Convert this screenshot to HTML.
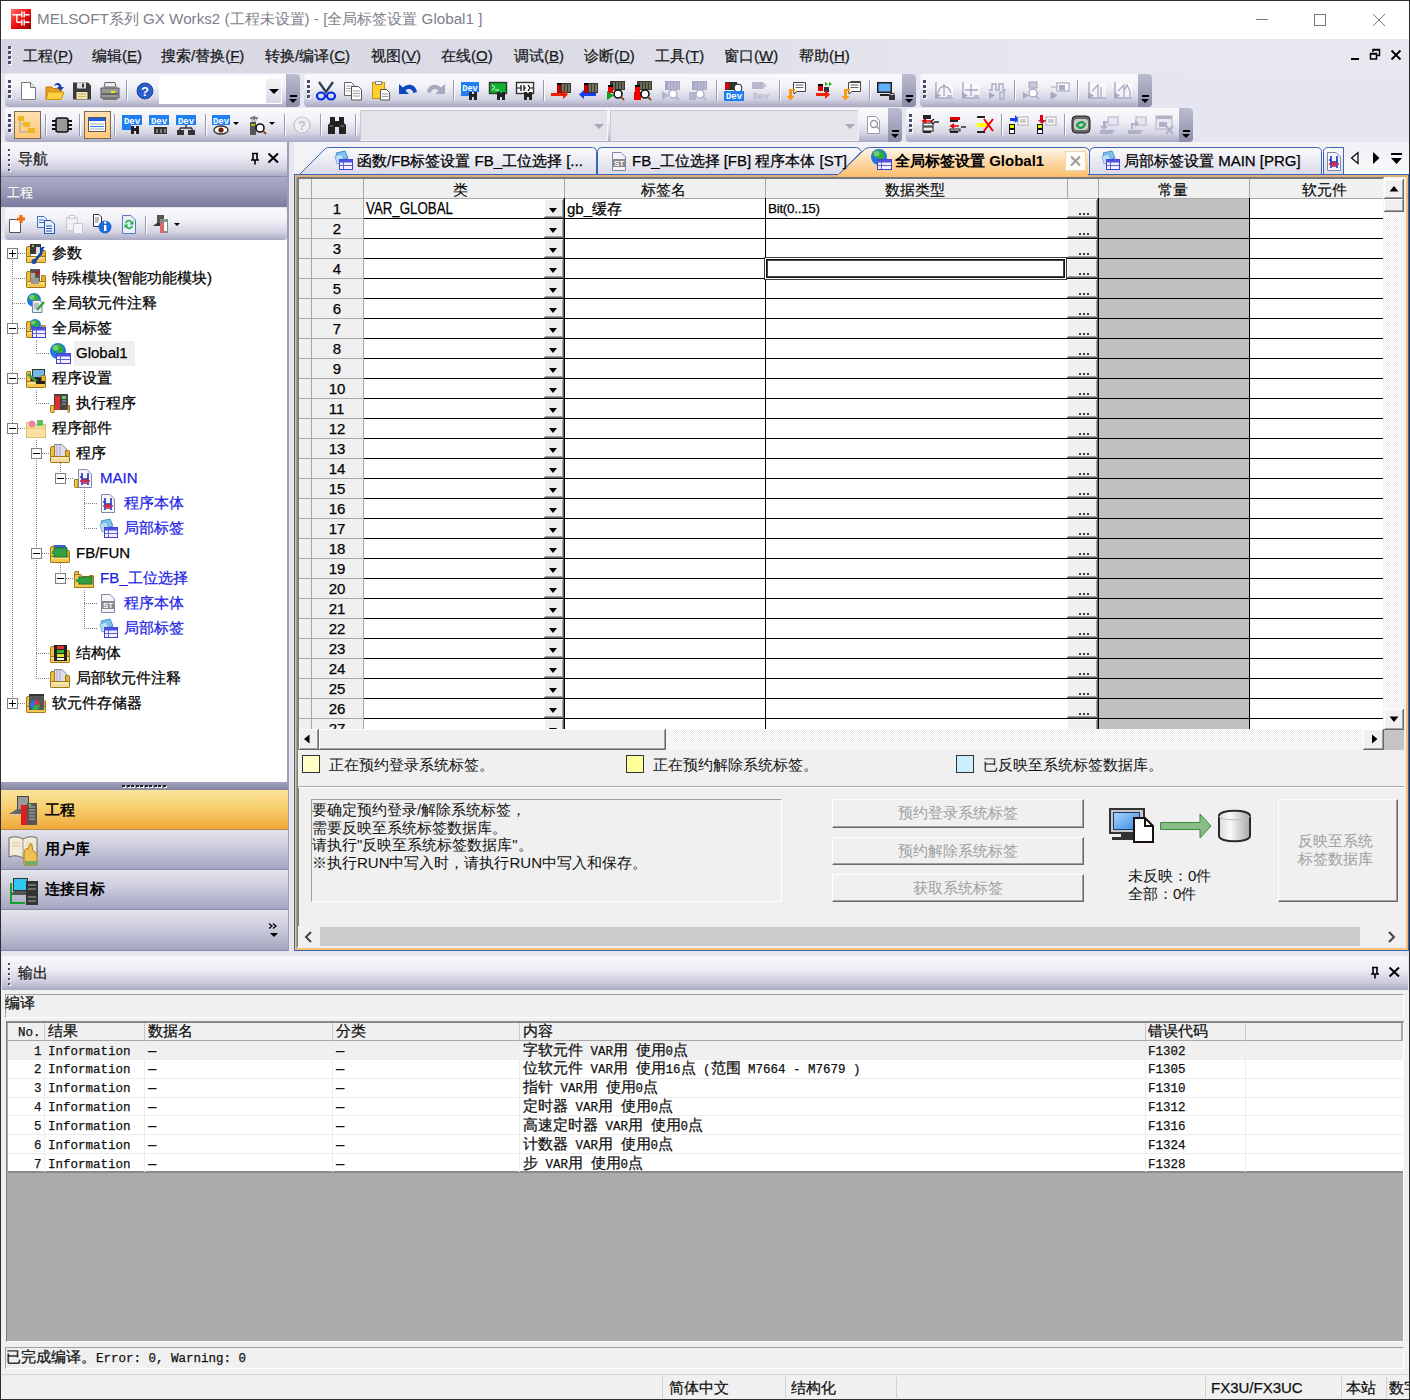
<!DOCTYPE html><html><head><meta charset="utf-8"><style>
*{margin:0;padding:0;box-sizing:border-box}
html,body{width:1410px;height:1400px;overflow:hidden}
body{position:relative;background:#2e2e2e;font-family:"Liberation Sans",sans-serif;font-size:15px;color:#000}
div{position:absolute}
.t{white-space:nowrap;line-height:20px;height:20px;-webkit-text-stroke:0.25px currentColor}
.tbar{border-radius:4px;background:linear-gradient(#fafafd 0%,#f0f0f6 40%,#d4d4e4 75%,#a8a8c2 100%)}
.ovf{border-radius:0 4px 4px 0;background:linear-gradient(#bcbcd0,#8c8caa)}
.sep{width:2px;background:linear-gradient(90deg,#9898b4 50%,#fff 50%)}
.u{text-decoration:underline;text-underline-offset:1px}
.gr{width:2px;height:2px;background:#4a4a70;box-shadow:1px 1px 0 #fff}
.tri{width:0;height:0;border-left:4px solid transparent;border-right:4px solid transparent;border-top:5px solid #000}
</style></head><body>
<div style="left:1px;top:1px;width:1408px;height:1398px;background:#e6e6f0"></div>
<div style="left:1409px;top:0px;width:1px;height:1400px;background:#3a5a8a"></div>
<div style="left:1px;top:1px;width:1408px;height:38px;background:#fff"></div>
<svg style="position:absolute;left:11px;top:9px;" width="20" height="20" viewBox="0 0 20 20"><defs><linearGradient id="rg" x1="0" y1="0" x2="1" y2="1"><stop offset="0" stop-color="#ff7070"/><stop offset=".5" stop-color="#f01010"/><stop offset="1" stop-color="#900000"/></linearGradient></defs><rect width="20" height="20" fill="url(#rg)"/><path d="M1.5 5.8H10M13 5.8H18.5M5.8 5.8V13.3M5.8 13.3H10M13 13.3H18.5M10.8 2.5V8.5M13.2 2.5V8.5M10.8 10.5V16.5M13.2 10.5V16.5" stroke="#fff" stroke-width="1.4" fill="none"/></svg>
<div class="t" style="left:37px;top:9px;color:#80808a;font-size:15.2px;-webkit-text-stroke:0">MELSOFT系列 GX Works2 (工程未设置) - [全局标签设置 Global1 ]</div>
<div style="left:1256px;top:19px;width:12px;height:1px;background:#777"></div>
<div style="left:1314px;top:14px;width:12px;height:12px;border:1px solid #777"></div>
<svg style="position:absolute;left:1372px;top:13px;" width="14" height="14" viewBox="0 0 14 14"><path d="M1 1L13 13M13 1L1 13" stroke="#777" stroke-width="1"/></svg>
<div style="left:1px;top:39px;width:1408px;height:34px;background:linear-gradient(90deg,#d6d6e4 0%,#dcdce8 40%,#e6e6ee 70%,#e8e8f0 100%)"></div>
<div class="gr" style="left:8px;top:46px;width:3px;height:3px;"></div>
<div class="gr" style="left:8px;top:51px;width:3px;height:3px;"></div>
<div class="gr" style="left:8px;top:56px;width:3px;height:3px;"></div>
<div class="gr" style="left:8px;top:61px;width:3px;height:3px;"></div>
<div class="t" style="left:23px;top:46px;color:#1a1a1a">工程(<span class="u">P</span>)</div>
<div class="t" style="left:92px;top:46px;color:#1a1a1a">编辑(<span class="u">E</span>)</div>
<div class="t" style="left:161px;top:46px;color:#1a1a1a">搜索/替换(<span class="u">F</span>)</div>
<div class="t" style="left:265px;top:46px;color:#1a1a1a">转换/编译(<span class="u">C</span>)</div>
<div class="t" style="left:371px;top:46px;color:#1a1a1a">视图(<span class="u">V</span>)</div>
<div class="t" style="left:441px;top:46px;color:#1a1a1a">在线(<span class="u">O</span>)</div>
<div class="t" style="left:514px;top:46px;color:#1a1a1a">调试(<span class="u">B</span>)</div>
<div class="t" style="left:584px;top:46px;color:#1a1a1a">诊断(<span class="u">D</span>)</div>
<div class="t" style="left:655px;top:46px;color:#1a1a1a">工具(<span class="u">T</span>)</div>
<div class="t" style="left:724px;top:46px;color:#1a1a1a">窗口(<span class="u">W</span>)</div>
<div class="t" style="left:799px;top:46px;color:#1a1a1a">帮助(<span class="u">H</span>)</div>
<div style="left:1351px;top:58px;width:8px;height:2px;background:#000"></div>
<svg style="position:absolute;left:1369px;top:48px;" width="12" height="13" viewBox="0 0 12 13"><path d="M4 4V1.5H10.5V7.5H8" stroke="#000" stroke-width="1.5" fill="none"/><path d="M4 2.2H10.5" stroke="#000" stroke-width="1"/><rect x="1.5" y="5.5" width="6" height="5.5" stroke="#000" stroke-width="1.5" fill="none"/><path d="M1.5 6.2H7.5" stroke="#000"/></svg>
<svg style="position:absolute;left:1390px;top:49px;" width="12" height="12" viewBox="0 0 12 12"><path d="M1.5 1.5L10.5 10.5M10.5 1.5L1.5 10.5" stroke="#000" stroke-width="1.8"/></svg>
<div class="tbar" style="left:5px;top:74px;width:295px;height:33px;"></div>
<div class="gr" style="left:8px;top:80px;width:3px;height:3px;"></div>
<div class="gr" style="left:8px;top:85px;width:3px;height:3px;"></div>
<div class="gr" style="left:8px;top:90px;width:3px;height:3px;"></div>
<div class="gr" style="left:8px;top:95px;width:3px;height:3px;"></div>
<div class="ovf" style="left:286px;top:74px;width:14px;height:33px;"></div>
<div style="left:290px;top:95px;width:7px;height:2px;background:#000"></div>
<div class="tri" style="left:289px;top:99px;border-left-width:4.5px;border-right-width:4.5px;border-top-width:4px"></div>
<div class="tbar" style="left:304px;top:74px;width:612px;height:33px;"></div>
<div class="gr" style="left:307px;top:80px;width:3px;height:3px;"></div>
<div class="gr" style="left:307px;top:85px;width:3px;height:3px;"></div>
<div class="gr" style="left:307px;top:90px;width:3px;height:3px;"></div>
<div class="gr" style="left:307px;top:95px;width:3px;height:3px;"></div>
<div class="ovf" style="left:902px;top:74px;width:14px;height:33px;"></div>
<div style="left:906px;top:95px;width:7px;height:2px;background:#000"></div>
<div class="tri" style="left:905px;top:99px;border-left-width:4.5px;border-right-width:4.5px;border-top-width:4px"></div>
<div class="tbar" style="left:920px;top:74px;width:232px;height:33px;"></div>
<div class="gr" style="left:923px;top:80px;width:3px;height:3px;"></div>
<div class="gr" style="left:923px;top:85px;width:3px;height:3px;"></div>
<div class="gr" style="left:923px;top:90px;width:3px;height:3px;"></div>
<div class="gr" style="left:923px;top:95px;width:3px;height:3px;"></div>
<div class="ovf" style="left:1138px;top:74px;width:14px;height:33px;"></div>
<div style="left:1142px;top:95px;width:7px;height:2px;background:#000"></div>
<div class="tri" style="left:1141px;top:99px;border-left-width:4.5px;border-right-width:4.5px;border-top-width:4px"></div>
<div class="tbar" style="left:5px;top:108px;width:897px;height:34px;"></div>
<div class="gr" style="left:8px;top:114px;width:3px;height:3px;"></div>
<div class="gr" style="left:8px;top:119px;width:3px;height:3px;"></div>
<div class="gr" style="left:8px;top:124px;width:3px;height:3px;"></div>
<div class="gr" style="left:8px;top:129px;width:3px;height:3px;"></div>
<div class="ovf" style="left:888px;top:108px;width:14px;height:34px;"></div>
<div style="left:892px;top:130px;width:7px;height:2px;background:#000"></div>
<div class="tri" style="left:891px;top:134px;border-left-width:4.5px;border-right-width:4.5px;border-top-width:4px"></div>
<div class="tbar" style="left:906px;top:108px;width:287px;height:34px;"></div>
<div class="gr" style="left:909px;top:114px;width:3px;height:3px;"></div>
<div class="gr" style="left:909px;top:119px;width:3px;height:3px;"></div>
<div class="gr" style="left:909px;top:124px;width:3px;height:3px;"></div>
<div class="gr" style="left:909px;top:129px;width:3px;height:3px;"></div>
<div class="ovf" style="left:1179px;top:108px;width:14px;height:34px;"></div>
<div style="left:1183px;top:130px;width:7px;height:2px;background:#000"></div>
<div class="tri" style="left:1182px;top:134px;border-left-width:4.5px;border-right-width:4.5px;border-top-width:4px"></div>
<svg style="position:absolute;left:19px;top:81px;overflow:visible" width="20" height="20" viewBox="0 0 20 20"><path d="M2.5 1.5H11.5L16.5 6.5V18.5H2.5Z" fill="#fff" stroke="#777" stroke-width="1"/><path d="M11.5 1.5V6.5H16.5" fill="#e8e8e8" stroke="#777"/></svg>
<svg style="position:absolute;left:45px;top:81px;overflow:visible" width="20" height="20" viewBox="0 0 20 20"><path d="M1 6H7L8.5 7.5H16V18H1Z" fill="#e8a020" stroke="#c07810"/><path d="M3 11H19L16 18.5H1Z" fill="#ffd040" stroke="#d09010"/><path d="M9 5C10 1 16 1 16.5 6L19 6L15.5 10L12 6L14 6C13.5 3.5 11 3.5 9 5Z" fill="#1040b0"/></svg>
<svg style="position:absolute;left:72px;top:81px;overflow:visible" width="20" height="20" viewBox="0 0 20 20"><path d="M1 1.5H16L19 4.5V18.5H1Z" fill="#3a3a3a"/><rect x="5" y="1.5" width="9" height="6" fill="#ddd"/><rect x="10" y="2.5" width="2" height="4" fill="#3a3a3a"/><rect x="4.5" y="11" width="11" height="7" fill="#f4e4a8"/><path d="M6 13H14M6 15.5H14" stroke="#c8b880"/></svg>
<svg style="position:absolute;left:100px;top:81px;overflow:visible" width="20" height="20" viewBox="0 0 20 20"><path d="M5 1.5H15L16 6H4Z" fill="#eee" stroke="#666"/><path d="M1 7H19V17H1Z" fill="#999" stroke="#555" rx="2"/><rect x="2" y="12" width="16" height="2" fill="#666"/><rect x="11" y="10" width="4" height="2" fill="#ee0"/><path d="M3 17H17V19H3Z" fill="#777"/></svg>
<div class="sep" style="left:126px;top:80px;width:2px;height:21px;"></div>
<svg style="position:absolute;left:135px;top:81px;overflow:visible" width="20" height="20" viewBox="0 0 20 20"><circle cx="10" cy="10" r="9" fill="#fff" opacity=".7"/><circle cx="10" cy="10" r="8" fill="#2a5ec8" stroke="#1a40a0"/><text x="10" y="15" font-size="13" text-anchor="middle" fill="#fff" font-family="Liberation Sans" font-weight="bold">?</text></svg>
<div style="left:159px;top:76px;width:123px;height:28px;background:#fff"></div>
<div style="left:266px;top:78px;width:15px;height:25px;background:linear-gradient(#f4f4f8,#d8d8e4)"></div>
<div class="tri" style="left:269px;top:89px;border-left-width:5px;border-right-width:5px;border-top-width:5px"></div>
<svg style="position:absolute;left:316px;top:81px;overflow:visible" width="20" height="20" viewBox="0 0 20 20"><path d="M3 1L10 11L17 1" stroke="#2a3e50" stroke-width="2.2" fill="none"/><ellipse cx="5" cy="15" rx="4" ry="3.5" fill="none" stroke="#0028f0" stroke-width="2.2"/><ellipse cx="15" cy="15" rx="4" ry="3.5" fill="none" stroke="#0028f0" stroke-width="2.2"/></svg>
<svg style="position:absolute;left:343px;top:81px;overflow:visible" width="20" height="20" viewBox="0 0 20 20"><path d="M1.5 1.5H8.5L11 4V14.5H1.5Z" fill="#fff" stroke="#666"/><path d="M3 5H9M3 7.5H9M3 10H9" stroke="#aaa"/><path d="M8.5 5.5H15.5L18.5 8.5V19H8.5Z" fill="#fff" stroke="#555"/><path d="M10 10H17M10 12.5H17M10 15H17" stroke="#999"/></svg>
<svg style="position:absolute;left:371px;top:81px;overflow:visible" width="20" height="20" viewBox="0 0 20 20"><rect x="1.5" y="1.5" width="12" height="16" fill="#ffd030" stroke="#c89010"/><rect x="4.5" y="0.5" width="6" height="3" fill="#fff" stroke="#888"/><path d="M9.5 8.5H15.5L18.5 11.5V19H9.5Z" fill="#fff" stroke="#555"/><path d="M11 13H17M11 15.5H17" stroke="#999"/></svg>
<svg style="position:absolute;left:398px;top:81px;overflow:visible" width="20" height="20" viewBox="0 0 20 20"><path d="M1 3V13H11L7.5 9.5C10 7 14 7.5 15.5 12L19 11C17.5 3 10 2 5 6.5Z" fill="#1048c0"/></svg>
<svg style="position:absolute;left:426px;top:81px;overflow:visible" width="20" height="20" viewBox="0 0 20 20"><path d="M19 3V13H9L12.5 9.5C10 7 6 7.5 4.5 12L1 11C2.5 3 10 2 15 6.5Z" fill="#a8a8c0"/></svg>
<div class="sep" style="left:453px;top:80px;width:2px;height:21px;"></div>
<svg style="position:absolute;left:461px;top:81px;overflow:visible" width="20" height="20" viewBox="0 0 20 20"><rect x="0" y="1" width="18" height="10" fill="#1e80f0"/><text x="9" y="9.5" font-size="8.5" text-anchor="middle" fill="#fff" font-family="Liberation Mono" font-weight="bold">Dev</text><rect x="0" y="11" width="9" height="4" fill="#1e80f0"/><path d="M8 11h3v2h2v-2h3v8h-3v-3h-2v3h-3Z" fill="#222"/></svg>
<svg style="position:absolute;left:489px;top:81px;overflow:visible" width="20" height="20" viewBox="0 0 20 20"><rect x="0.5" y="1.5" width="17" height="11" fill="#10b030" stroke="#333" stroke-width="1.4"/><path d="M3 4L6 6.5L3 9M6 9H10" stroke="#fff" stroke-width="1" fill="none"/><path d="M8 11h3v2h2v-2h3v8h-3v-3h-2v3h-3Z" fill="#222"/></svg>
<svg style="position:absolute;left:516px;top:81px;overflow:visible" width="20" height="20" viewBox="0 0 20 20"><rect x="0.5" y="1.5" width="17" height="11" fill="#fff" stroke="#333" stroke-width="1.4"/><path d="M1 7H5M5 4V10M8 4V10M8 7H10M12 4L14 7L12 10M15 7H17" stroke="#000" stroke-width="1.2" fill="none"/><path d="M8 11h3v2h2v-2h3v8h-3v-3h-2v3h-3Z" fill="#222"/></svg>
<div class="sep" style="left:543px;top:80px;width:2px;height:21px;"></div>
<svg style="position:absolute;left:551px;top:81px;overflow:visible" width="20" height="20" viewBox="0 0 20 20"><rect x="6" y="2" width="14" height="10" fill="#3a3a30"/><path d="M12 3V11M15 3V11M18 3V11" stroke="#9a9a80" stroke-width="1.2"/><rect x="6" y="4" width="4" height="8" fill="#c00000"/><rect x="6" y="2" width="4" height="2" fill="#000"/><path d="M0 12H12V9L17 13.5L12 18V15H0Z" fill="#f02000"/></svg>
<svg style="position:absolute;left:578px;top:81px;overflow:visible" width="20" height="20" viewBox="0 0 20 20"><rect x="6" y="2" width="14" height="10" fill="#3a3a30"/><path d="M12 3V11M15 3V11M18 3V11" stroke="#9a9a80" stroke-width="1.2"/><rect x="6" y="4" width="4" height="8" fill="#c00000"/><rect x="6" y="2" width="4" height="2" fill="#000"/><path d="M18 12H6V9L1 13.5L6 18V15H18Z" fill="#1040f0"/></svg>
<svg style="position:absolute;left:606px;top:81px;overflow:visible" width="20" height="20" viewBox="0 0 20 20"><rect x="4" y="0" width="15" height="9" fill="#3a3a30"/><path d="M8 1V8M11 1V8M14 1V8M17 1V8" stroke="#9a9a80"/><rect x="2" y="4" width="5" height="8" fill="#e00"/><rect x="2" y="4" width="5" height="2" fill="#000"/><path d="M1 10V19L8 14.5Z" fill="#10a020"/><circle cx="12" cy="13" r="4" fill="#fff" stroke="#111" stroke-width="1.6"/><path d="M15 16L18 19" stroke="#8a4a10" stroke-width="2"/></svg>
<svg style="position:absolute;left:633px;top:81px;overflow:visible" width="20" height="20" viewBox="0 0 20 20"><rect x="4" y="0" width="15" height="9" fill="#3a3a30"/><path d="M8 1V8M11 1V8M14 1V8M17 1V8" stroke="#9a9a80"/><rect x="2" y="4" width="5" height="8" fill="#e00"/><rect x="2" y="4" width="5" height="2" fill="#000"/><rect x="1" y="11" width="7" height="8" fill="#f00000"/><circle cx="12" cy="13" r="4" fill="#fff" stroke="#111" stroke-width="1.6"/><path d="M15 16L18 19" stroke="#8a4a10" stroke-width="2"/></svg>
<svg style="position:absolute;left:661px;top:81px;overflow:visible" width="20" height="20" viewBox="0 0 20 20"><rect x="4" y="0" width="15" height="9" fill="#a8a8c4"/><path d="M8 1V8M11 1V8M14 1V8M17 1V8" stroke="#c8c8dc"/><path d="M1 10V19L8 14.5Z" fill="#b4b4cc"/><circle cx="12" cy="13" r="4" fill="#fff" stroke="#b4b4cc" stroke-width="1.6"/><path d="M15 16L18 19" stroke="#b4b4cc" stroke-width="2"/></svg>
<svg style="position:absolute;left:688px;top:81px;overflow:visible" width="20" height="20" viewBox="0 0 20 20"><rect x="4" y="0" width="15" height="9" fill="#a8a8c4"/><path d="M8 1V8M11 1V8M14 1V8M17 1V8" stroke="#c8c8dc"/><rect x="1" y="11" width="7" height="8" fill="#b4b4cc"/><circle cx="12" cy="13" r="4" fill="#fff" stroke="#b4b4cc" stroke-width="1.6"/><path d="M15 16L18 19" stroke="#b4b4cc" stroke-width="2"/></svg>
<div class="sep" style="left:716px;top:80px;width:2px;height:21px;"></div>
<svg style="position:absolute;left:724px;top:81px;overflow:visible" width="20" height="20" viewBox="0 0 20 20"><rect x="1" y="1" width="12" height="8" fill="#333"/><rect x="1" y="2" width="4" height="6" fill="#e00"/><circle cx="14" cy="7" r="4" fill="#fff" stroke="#222"/><rect x="0" y="10" width="20" height="10" fill="#1e80f0"/><text x="10" y="18" font-size="9" text-anchor="middle" fill="#fff" font-family="Liberation Mono" font-weight="bold">Dev</text></svg>
<svg style="position:absolute;left:751px;top:81px;overflow:visible" width="20" height="20" viewBox="0 0 20 20"><rect x="1" y="1" width="11" height="7" fill="#b8b8cc"/><path d="M12 1L16 4.5L12 8" fill="#c8c8d8"/><text x="10" y="17.5" font-size="9" text-anchor="middle" fill="#b8b8cc" font-family="Liberation Mono" font-weight="bold">Dev</text></svg>
<div class="sep" style="left:779px;top:80px;width:2px;height:21px;"></div>
<svg style="position:absolute;left:787px;top:81px;overflow:visible" width="20" height="20" viewBox="0 0 20 20"><path d="M6.5 1.5H18.5V10.5H10L7 13V10.5H6.5Z" fill="#fff" stroke="#444"/><path d="M8.5 4H16.5M8.5 6.5H16.5" stroke="#666"/><path d="M3 8H8V10H5V15H7.5L3.5 19.5L-0.5 15H2V8Z" fill="#ff9a10"/></svg>
<svg style="position:absolute;left:815px;top:81px;overflow:visible" width="20" height="20" viewBox="0 0 20 20"><rect x="3" y="4" width="5" height="6" fill="#d00"/><rect x="3" y="3" width="5" height="2" fill="#000"/><path d="M9 6H14V11H9Z" fill="#333"/><path d="M10 1L13 3L10 5ZM14 1L17 3L14 5Z" fill="#10b010"/><path d="M1 12H10V9L15 13.5L10 18V15H1Z" fill="#f02000"/></svg>
<svg style="position:absolute;left:842px;top:81px;overflow:visible" width="20" height="20" viewBox="0 0 20 20"><path d="M8.5 0.5H18.5V7.5" fill="none" stroke="#444"/><path d="M6.5 1.5H18.5V10.5H10L7 13V10.5H6.5Z" fill="#fff" stroke="#444"/><path d="M8.5 4H16.5M8.5 6.5H16.5" stroke="#666"/><path d="M3 8H8V10H5V15H7.5L3.5 19.5L-0.5 15H2V8Z" fill="#ff9a10"/></svg>
<div class="sep" style="left:869px;top:80px;width:2px;height:21px;"></div>
<svg style="position:absolute;left:876px;top:81px;overflow:visible" width="20" height="20" viewBox="0 0 20 20"><rect x="1" y="1" width="15" height="11" fill="#222"/><rect x="2.5" y="2.5" width="12" height="8" fill="#60b0f8"/><rect x="4" y="13" width="9" height="2" fill="#222"/><rect x="13" y="14" width="6" height="5" fill="#333"/><path d="M14 14V12.5H18V14" stroke="#333" fill="none"/></svg>
<svg style="position:absolute;left:934px;top:81px;overflow:visible" width="20" height="20" viewBox="0 0 20 20"><rect x="2" y="2" width="17" height="15" fill="#fff" opacity=".6"/><path d="M2 1V18M2 17H19" stroke="#a8a8c4" stroke-width="1.4"/><path d="M1 11L7 14.5L1 18Z" fill="#a8a8c4"/><path d="M10 3V15M4 12C6 3 14 3 17 12M13 15H18" stroke="#a8a8c4" stroke-width="1.3" fill="none"/></svg>
<svg style="position:absolute;left:961px;top:81px;overflow:visible" width="20" height="20" viewBox="0 0 20 20"><rect x="2" y="2" width="17" height="15" fill="#fff" opacity=".6"/><path d="M2 1V18M2 17H19" stroke="#a8a8c4" stroke-width="1.4"/><path d="M1 11L7 14.5L1 18Z" fill="#a8a8c4"/><path d="M10 3V15M4 9H17M13 15H18" stroke="#a8a8c4" stroke-width="1.3" fill="none"/></svg>
<svg style="position:absolute;left:988px;top:81px;overflow:visible" width="20" height="20" viewBox="0 0 20 20"><path d="M1 9H4V3H8V9H11V3H15V9H18" stroke="#a8a8c4" stroke-width="1.4" fill="none"/><rect x="12" y="11" width="4" height="7" fill="none" stroke="#a8a8c4" stroke-width="1.3"/><path d="M1 11L7 14.5L1 18Z" fill="#a8a8c4"/></svg>
<svg style="position:absolute;left:1022px;top:81px;overflow:visible" width="20" height="20" viewBox="0 0 20 20"><rect x="7" y="1" width="8" height="6" fill="#c8c8d8" stroke="#a8a8c4"/><circle cx="11" cy="12" r="4" fill="#fff" stroke="#a8a8c4" stroke-width="1.4"/><path d="M14 15L17 18" stroke="#a8a8c4" stroke-width="1.4"/><path d="M1 11L7 14.5L1 18Z" fill="#a8a8c4"/></svg>
<svg style="position:absolute;left:1050px;top:81px;overflow:visible" width="20" height="20" viewBox="0 0 20 20"><rect x="7" y="2" width="12" height="8" fill="#fff" stroke="#a8a8c4" stroke-width="1.2"/><rect x="9" y="4" width="6" height="5" fill="#a8a8c4"/><path d="M1 6H7M1 11L7 14.5L1 18Z" fill="#a8a8c4" stroke="#a8a8c4"/></svg>
<svg style="position:absolute;left:1087px;top:81px;overflow:visible" width="20" height="20" viewBox="0 0 20 20"><rect x="2" y="2" width="17" height="15" fill="#fff" opacity=".6"/><path d="M2 1V18M2 17H19" stroke="#a8a8c4" stroke-width="1.4"/><path d="M1 11L7 14.5L1 18Z" fill="#a8a8c4"/><path d="M5 10L11 4V16M14 6V16" stroke="#a8a8c4" stroke-width="1.3" fill="none"/></svg>
<svg style="position:absolute;left:1113px;top:81px;overflow:visible" width="20" height="20" viewBox="0 0 20 20"><rect x="2" y="2" width="17" height="15" fill="#fff" opacity=".6"/><path d="M2 1V18M2 17H19" stroke="#a8a8c4" stroke-width="1.4"/><path d="M1 11L7 14.5L1 18Z" fill="#a8a8c4"/><path d="M5 10L11 4V16M11 10L14 4L17 10V16" stroke="#a8a8c4" stroke-width="1.3" fill="none"/></svg>
<div class="sep" style="left:1014px;top:80px;width:2px;height:21px;"></div>
<div class="sep" style="left:1077px;top:80px;width:2px;height:21px;"></div>
<div style="left:14px;top:111px;width:27px;height:28px;background:linear-gradient(#ffe0b0,#ffc878);border:1px solid #7a6a50"></div>
<svg style="position:absolute;left:17px;top:115px;overflow:visible" width="20" height="20" viewBox="0 0 20 20"><rect x="1" y="1" width="6" height="5" fill="#f0b820"/><rect x="6" y="7" width="7" height="5" fill="#f0b820"/><rect x="11" y="13" width="7" height="5" fill="#f0b820"/><path d="M3 6V17H11M3 9H6" stroke="#aaa" stroke-width="1.2" fill="none"/></svg>
<div class="sep" style="left:45px;top:114px;width:2px;height:22px;"></div>
<svg style="position:absolute;left:52px;top:115px;overflow:visible" width="20" height="20" viewBox="0 0 20 20"><rect x="4" y="3" width="12" height="14" rx="2" fill="#999" stroke="#111" stroke-width="1.6"/><path d="M0 6H4M0 10H4M0 14H4M16 6H20M16 10H20M16 14H20" stroke="#111" stroke-width="1.8"/></svg>
<div class="sep" style="left:79px;top:114px;width:2px;height:22px;"></div>
<div style="left:84px;top:111px;width:27px;height:28px;background:linear-gradient(#ffe0b0,#ffc878);border:1px solid #7a6a50"></div>
<svg style="position:absolute;left:87px;top:115px;overflow:visible" width="20" height="20" viewBox="0 0 20 20"><rect x="1.5" y="2.5" width="17" height="14" fill="#fff" stroke="#555"/><rect x="2" y="3" width="16" height="3" fill="#2060e0"/><path d="M3 9H17M3 11.5H17M3 14H17" stroke="#aaa"/><path d="M3 11.5H17" stroke="#3080f0"/></svg>
<div class="sep" style="left:114px;top:114px;width:2px;height:22px;"></div>
<svg style="position:absolute;left:122px;top:115px;overflow:visible" width="20" height="20" viewBox="0 0 20 20"><rect x="0" y="0" width="20" height="10" fill="#1e80f0"/><text x="10" y="8.5" font-size="9" text-anchor="middle" fill="#fff" font-family="Liberation Mono" font-weight="bold">Dev</text><rect x="0" y="10" width="9" height="5" fill="#1e80f0"/><path d="M9 11h3v2h2v-2h3v8h-3v-3h-2v3h-3Z" fill="#222"/></svg>
<svg style="position:absolute;left:149px;top:115px;overflow:visible" width="20" height="20" viewBox="0 0 20 20"><rect x="0" y="0" width="20" height="10" fill="#1e80f0"/><text x="10" y="8.5" font-size="9" text-anchor="middle" fill="#fff" font-family="Liberation Mono" font-weight="bold">Dev</text><rect x="5" y="12" width="13" height="7" fill="#333"/><path d="M7 15H9M11 15H13M15 15H17M7 17H9M11 17H13M15 17H17" stroke="#ccc"/></svg>
<svg style="position:absolute;left:176px;top:115px;overflow:visible" width="20" height="20" viewBox="0 0 20 20"><rect x="0" y="0" width="20" height="10" fill="#1e80f0"/><text x="10" y="8.5" font-size="9" text-anchor="middle" fill="#fff" font-family="Liberation Mono" font-weight="bold">Dev</text><path d="M10 10V13M4 13H16M4 13V15M16 13V15" stroke="#333" stroke-width="1.4"/><rect x="1" y="15" width="7" height="5" fill="#333"/><rect x="12" y="15" width="7" height="5" fill="#333"/></svg>
<div class="sep" style="left:205px;top:114px;width:2px;height:22px;"></div>
<svg style="position:absolute;left:212px;top:115px;overflow:visible" width="28" height="20" viewBox="0 0 28 20"><rect x="0" y="0" width="18" height="10" fill="#1e80f0"/><text x="9" y="8.5" font-size="9" text-anchor="middle" fill="#fff" font-family="Liberation Mono" font-weight="bold">Dev</text><ellipse cx="9" cy="15" rx="7" ry="4" fill="#fff" stroke="#333" stroke-width="1.4"/><circle cx="9" cy="15" r="2.6" fill="#6a2000"/><path d="M21 7H27L24 10Z" fill="#000"/></svg>
<svg style="position:absolute;left:247px;top:115px;overflow:visible" width="28" height="20" viewBox="0 0 28 20"><path d="M7 1V5M3 3H11" stroke="#666" stroke-width="1.4"/><circle cx="7" cy="4" r="2.5" fill="none" stroke="#888"/><rect x="3" y="7" width="6" height="13" fill="#555"/><rect x="4" y="9" width="4" height="2" fill="#9c0"/><circle cx="13" cy="13" r="4" fill="#fff" stroke="#111" stroke-width="1.6"/><path d="M16 16L19 19" stroke="#8a4a10" stroke-width="2"/><path d="M22 7H28L25 10Z" fill="#000"/></svg>
<div class="sep" style="left:284px;top:114px;width:2px;height:22px;"></div>
<svg style="position:absolute;left:292px;top:115px;overflow:visible" width="20" height="20" viewBox="0 0 20 20"><circle cx="10" cy="10" r="8" fill="#f0f0f4" stroke="#c0c0c8" stroke-width="1.2"/><text x="10" y="15" font-size="13" text-anchor="middle" fill="#c0c0c8" font-family="Liberation Sans" font-weight="bold">?</text></svg>
<div class="sep" style="left:320px;top:114px;width:2px;height:22px;"></div>
<svg style="position:absolute;left:327px;top:115px;overflow:visible" width="20" height="20" viewBox="0 0 20 20"><path d="M3 2H8V6H12V2H17V8L19 10V19H12V12H8V19H1V10L3 8Z" fill="#222"/><path d="M2.5 11H6.5M13.5 11H17.5" stroke="#888"/></svg>
<div class="sep" style="left:355px;top:114px;width:2px;height:22px;"></div>
<div style="left:360px;top:110px;width:248px;height:31px;background:#e4e4ea;border:1px solid #c8c8d4;border-right-color:#f4f4f8;border-bottom-color:#f4f4f8"></div>
<div style="left:610px;top:110px;width:249px;height:31px;background:#e4e4ea;border:1px solid #c8c8d4;border-right-color:#f4f4f8;border-bottom-color:#f4f4f8"></div>
<div class="tri" style="left:594px;top:124px;border-left-width:5px;border-right-width:5px;border-top-width:5px;border-top-color:#a8a8b8"></div>
<div class="tri" style="left:845px;top:124px;border-left-width:5px;border-right-width:5px;border-top-width:5px;border-top-color:#a8a8b8"></div>
<svg style="position:absolute;left:865px;top:115px;overflow:visible" width="20" height="20" viewBox="0 0 20 20"><path d="M2.5 1.5H10.5L14.5 5.5V18.5H2.5Z" fill="#fff" stroke="#9a9aa8"/><circle cx="9" cy="9" r="3.5" fill="none" stroke="#9a9aa8" stroke-width="1.4"/><path d="M11.5 11.5L14 14" stroke="#9a9aa8" stroke-width="1.4"/></svg>
<svg style="position:absolute;left:920px;top:115px;overflow:visible" width="20" height="20" viewBox="0 0 20 20"><path d="M3 1H11M3 17H11" stroke="#222" stroke-width="2"/><rect x="3" y="8" width="10" height="3" fill="#fff" stroke="#222"/><rect x="3" y="12" width="10" height="4" fill="#eee" stroke="#222"/><path d="M14 7H19M14 4L11 6.5L14 9" stroke="#222" stroke-width="1.4" fill="none"/><path d="M6 8L3 6L6 4M3 6H12" stroke="#e00" stroke-width="1.6" fill="none"/><path d="M3 3H11" stroke="#222" stroke-width="2"/></svg>
<svg style="position:absolute;left:947px;top:115px;overflow:visible" width="20" height="20" viewBox="0 0 20 20"><rect x="3" y="2" width="10" height="3" fill="#d00"/><path d="M3 6H11M3 17H11" stroke="#222" stroke-width="2"/><path d="M14 12H19" stroke="#222" stroke-width="1.4"/><path d="M7 13L4 11L7 9M4 11H12" stroke="#e00" stroke-width="1.6" fill="none"/><rect x="3" y="14" width="10" height="2" fill="#eee" stroke="#222"/></svg>
<svg style="position:absolute;left:974px;top:115px;overflow:visible" width="20" height="20" viewBox="0 0 20 20"><path d="M3 2H11M3 17H11" stroke="#222" stroke-width="2"/><rect x="3" y="8" width="12" height="4" fill="#ff0"/><path d="M10 4L19 16M19 4L10 16" stroke="#e00" stroke-width="2"/></svg>
<div class="sep" style="left:1001px;top:114px;width:2px;height:22px;"></div>
<svg style="position:absolute;left:1008px;top:115px;overflow:visible" width="20" height="20" viewBox="0 0 20 20"><path d="M2 3H7V0L11 4L7 8V6H2Z" fill="#1040f0" transform=""/><rect x="1" y="9" width="6" height="10" fill="#111"/><rect x="2" y="10" width="4" height="3" fill="#ee0"/><rect x="2" y="15" width="4" height="3" fill="#fff"/><rect x="10" y="2" width="10" height="8" fill="#fff" stroke="#aaa"/><path d="M10 6H4" stroke="#1040f0" stroke-dasharray="1 1"/><path d="M12 5H18M12 7H18" stroke="#999"/></svg>
<svg style="position:absolute;left:1036px;top:115px;overflow:visible" width="20" height="20" viewBox="0 0 20 20"><path d="M2 3H7V0L11 4L7 8V6H2Z" fill="#e00" transform="rotate(90 6 4)"/><rect x="1" y="9" width="6" height="10" fill="#111"/><rect x="2" y="10" width="4" height="3" fill="#ee0"/><rect x="2" y="15" width="4" height="3" fill="#fff"/><rect x="10" y="2" width="10" height="8" fill="#fff" stroke="#aaa"/><path d="M10 6H4" stroke="#1040f0" stroke-dasharray="1 1"/><path d="M12 5H18M12 7H18" stroke="#999"/></svg>
<div class="sep" style="left:1064px;top:114px;width:2px;height:22px;"></div>
<svg style="position:absolute;left:1071px;top:115px;overflow:visible" width="20" height="20" viewBox="0 0 20 20"><rect x="1" y="1" width="18" height="17" rx="4" fill="#666" stroke="#222"/><rect x="3" y="4" width="14" height="11" rx="3" fill="#ccc"/><path d="M6 12C6 8 10 6 13 8M14 8C14 12 10 14 7 12" stroke="#10a040" stroke-width="2.2" fill="none"/></svg>
<svg style="position:absolute;left:1099px;top:115px;overflow:visible" width="20" height="20" viewBox="0 0 20 20"><rect x="9" y="2" width="10" height="8" fill="#e8e8f0" stroke="#b0b0c8"/><path d="M8 6H4V11H1L5 15L9 11H7V8H9" fill="#b0b0c8"/><path d="M1 15H16L13 19H1Z" fill="#b0b0c8"/></svg>
<svg style="position:absolute;left:1127px;top:115px;overflow:visible" width="20" height="20" viewBox="0 0 20 20"><rect x="9" y="2" width="10" height="8" fill="#e8e8f0" stroke="#b0b0c8"/><path d="M4 14V8H8V5L12 8.5L8 12V10H6V14Z" fill="#b0b0c8"/><path d="M1 15H16L13 19H1Z" fill="#b0b0c8"/></svg>
<svg style="position:absolute;left:1155px;top:115px;overflow:visible" width="20" height="20" viewBox="0 0 20 20"><rect x="1" y="1" width="16" height="13" fill="#e8e8f0" stroke="#b0b0c8"/><rect x="1" y="1" width="16" height="3" fill="#b0b0c8"/><rect x="4" y="7" width="8" height="5" fill="#b0b0c8"/><path d="M11 11L18 19M18 11L11 19" stroke="#b0b0c8" stroke-width="2"/></svg>
<div style="left:1px;top:142px;width:287px;height:34px;background:linear-gradient(#f6f6fa 0%,#eeeef6 40%,#cfcfe0 80%,#a9a9c3 100%);border-radius:3px 3px 0 0"></div>
<div class="gr" style="left:8px;top:149px;width:2px;height:2px;"></div>
<div class="gr" style="left:8px;top:154px;width:2px;height:2px;"></div>
<div class="gr" style="left:8px;top:159px;width:2px;height:2px;"></div>
<div class="gr" style="left:8px;top:164px;width:2px;height:2px;"></div>
<div class="gr" style="left:8px;top:169px;width:2px;height:2px;"></div>
<div class="t" style="left:18px;top:149px;color:#1a1a1a">导航</div>
<svg style="position:absolute;left:250px;top:152px;" width="10" height="13" viewBox="0 0 10 13"><path d="M2 1.5H8M3 1.5V8M7 1.5V8M1 8H9M5 8V12.5" stroke="#000" stroke-width="1.6" fill="none"/></svg>
<svg style="position:absolute;left:267px;top:152px;" width="13" height="12" viewBox="0 0 13 12"><path d="M1.5 1.5L11 10.5M11 1.5L1.5 10.5" stroke="#000" stroke-width="2"/></svg>
<div style="left:1px;top:176px;width:286px;height:1px;background:#8a8aa4"></div>
<div style="left:1px;top:177px;width:286px;height:30px;background:linear-gradient(#acacc8 0%,#9898b6 50%,#7a7a9e 100%)"></div>
<div class="t" style="left:7px;top:183px;color:#fff;font-size:12.5px;text-shadow:0 0 1px #666;-webkit-text-stroke:0.2px #fff">工程</div>
<div style="left:1px;top:207px;width:287px;height:33px;background:#e6e6f0"></div>
<div class="tbar" style="left:5px;top:208px;width:282px;height:32px;"></div>
<div class="sep" style="left:145px;top:216px;width:2px;height:18px;"></div>
<div style="left:1px;top:240px;width:287px;height:542px;background:#fff"></div>
<div style="left:287px;top:142px;width:2px;height:809px;background:#9c9cb4"></div>
<div style="left:1px;top:782px;width:287px;height:8px;background:linear-gradient(#a0a0bc,#8686a4)"></div>
<div style="left:122.0px;top:785px;width:3px;height:2px;background:#222;box-shadow:1px 1px 0 #fff"></div>
<div style="left:126.5px;top:785px;width:3px;height:2px;background:#222;box-shadow:1px 1px 0 #fff"></div>
<div style="left:131.0px;top:785px;width:3px;height:2px;background:#222;box-shadow:1px 1px 0 #fff"></div>
<div style="left:135.5px;top:785px;width:3px;height:2px;background:#222;box-shadow:1px 1px 0 #fff"></div>
<div style="left:140.0px;top:785px;width:3px;height:2px;background:#222;box-shadow:1px 1px 0 #fff"></div>
<div style="left:144.5px;top:785px;width:3px;height:2px;background:#222;box-shadow:1px 1px 0 #fff"></div>
<div style="left:149.0px;top:785px;width:3px;height:2px;background:#222;box-shadow:1px 1px 0 #fff"></div>
<div style="left:153.5px;top:785px;width:3px;height:2px;background:#222;box-shadow:1px 1px 0 #fff"></div>
<div style="left:158.0px;top:785px;width:3px;height:2px;background:#222;box-shadow:1px 1px 0 #fff"></div>
<div style="left:162.5px;top:785px;width:3px;height:2px;background:#222;box-shadow:1px 1px 0 #fff"></div>
<div style="left:1px;top:790px;width:287px;height:40px;background:linear-gradient(#fbe39a 0%,#f7cf70 45%,#f0a83a 100%);border-bottom:1px solid #b88a50"></div>
<div style="left:1px;top:830px;width:287px;height:40px;background:linear-gradient(#e4e4ee 0%,#c8c8da 50%,#a4a4c0 100%);border-bottom:1px solid #8a8aa8"></div>
<div style="left:1px;top:870px;width:287px;height:40px;background:linear-gradient(#e4e4ee 0%,#c8c8da 50%,#a4a4c0 100%);border-bottom:1px solid #8a8aa8"></div>
<div style="left:1px;top:910px;width:287px;height:41px;background:linear-gradient(#e4e4ee 0%,#c8c8da 50%,#a4a4c0 100%);border-bottom:1px solid #8a8aa8"></div>
<div class="t" style="left:45px;top:800px;font-weight:bold;color:#000;-webkit-text-stroke:0">工程</div>
<div class="t" style="left:45px;top:839px;font-weight:bold;color:#000;-webkit-text-stroke:0">用户库</div>
<div class="t" style="left:45px;top:879px;font-weight:bold;color:#000;-webkit-text-stroke:0">连接目标</div>
<svg style="position:absolute;left:268px;top:922px;" width="12" height="18" viewBox="0 0 12 18"><path d="M1 1.5L4 4L1 6.5M5 1.5L8 4L5 6.5" stroke="#000" stroke-width="1.3" fill="none"/><path d="M2 11H10L6 15Z" fill="#000"/></svg>
<div style="left:289px;top:142px;width:5px;height:809px;background:#e6e6f0"></div>
<div style="left:12px;top:258px;width:1px;height:444px;background:repeating-linear-gradient(#808080 0 1px,transparent 1px 2px)"></div>
<div style="left:36px;top:340px;width:1px;height:12px;background:repeating-linear-gradient(#808080 0 1px,transparent 1px 2px)"></div>
<div style="left:36px;top:390px;width:1px;height:12px;background:repeating-linear-gradient(#808080 0 1px,transparent 1px 2px)"></div>
<div style="left:36px;top:440px;width:1px;height:237px;background:repeating-linear-gradient(#808080 0 1px,transparent 1px 2px)"></div>
<div style="left:60px;top:463px;width:1px;height:9px;background:repeating-linear-gradient(#808080 0 1px,transparent 1px 2px)"></div>
<div style="left:84px;top:490px;width:1px;height:37px;background:repeating-linear-gradient(#808080 0 1px,transparent 1px 2px)"></div>
<div style="left:84px;top:590px;width:1px;height:37px;background:repeating-linear-gradient(#808080 0 1px,transparent 1px 2px)"></div>
<div style="left:60px;top:563px;width:1px;height:9px;background:repeating-linear-gradient(#808080 0 1px,transparent 1px 2px)"></div>
<div style="left:18px;top:253px;width:8px;height:1px;background:repeating-linear-gradient(90deg,#808080 0 1px,transparent 1px 2px)"></div>
<div style="left:7px;top:248px;width:11px;height:11px;background:#fff;border:1px solid #7f7f7f"></div>
<div style="left:9px;top:253px;width:7px;height:1px;background:#000"></div>
<div style="left:12px;top:250px;width:1px;height:7px;background:#000"></div>
<div class="t" style="left:52px;top:243px;color:#000">参数</div>
<div style="left:12px;top:278px;width:14px;height:1px;background:repeating-linear-gradient(90deg,#808080 0 1px,transparent 1px 2px)"></div>
<div class="t" style="left:52px;top:268px;color:#000">特殊模块(智能功能模块)</div>
<div style="left:12px;top:303px;width:14px;height:1px;background:repeating-linear-gradient(90deg,#808080 0 1px,transparent 1px 2px)"></div>
<div class="t" style="left:52px;top:293px;color:#000">全局软元件注释</div>
<div style="left:18px;top:328px;width:8px;height:1px;background:repeating-linear-gradient(90deg,#808080 0 1px,transparent 1px 2px)"></div>
<div style="left:7px;top:323px;width:11px;height:11px;background:#fff;border:1px solid #7f7f7f"></div>
<div style="left:9px;top:328px;width:7px;height:1px;background:#000"></div>
<div class="t" style="left:52px;top:318px;color:#000">全局标签</div>
<div style="left:36px;top:353px;width:14px;height:1px;background:repeating-linear-gradient(90deg,#808080 0 1px,transparent 1px 2px)"></div>
<div style="left:74px;top:341px;width:61px;height:25px;background:#efefef"></div>
<div class="t" style="left:76px;top:343px;color:#000">Global1</div>
<div style="left:18px;top:378px;width:8px;height:1px;background:repeating-linear-gradient(90deg,#808080 0 1px,transparent 1px 2px)"></div>
<div style="left:7px;top:373px;width:11px;height:11px;background:#fff;border:1px solid #7f7f7f"></div>
<div style="left:9px;top:378px;width:7px;height:1px;background:#000"></div>
<div class="t" style="left:52px;top:368px;color:#000">程序设置</div>
<div style="left:36px;top:403px;width:14px;height:1px;background:repeating-linear-gradient(90deg,#808080 0 1px,transparent 1px 2px)"></div>
<div class="t" style="left:76px;top:393px;color:#000">执行程序</div>
<div style="left:18px;top:428px;width:8px;height:1px;background:repeating-linear-gradient(90deg,#808080 0 1px,transparent 1px 2px)"></div>
<div style="left:7px;top:423px;width:11px;height:11px;background:#fff;border:1px solid #7f7f7f"></div>
<div style="left:9px;top:428px;width:7px;height:1px;background:#000"></div>
<div class="t" style="left:52px;top:418px;color:#000">程序部件</div>
<div style="left:42px;top:453px;width:8px;height:1px;background:repeating-linear-gradient(90deg,#808080 0 1px,transparent 1px 2px)"></div>
<div style="left:31px;top:448px;width:11px;height:11px;background:#fff;border:1px solid #7f7f7f"></div>
<div style="left:33px;top:453px;width:7px;height:1px;background:#000"></div>
<div class="t" style="left:76px;top:443px;color:#000">程序</div>
<div style="left:66px;top:478px;width:8px;height:1px;background:repeating-linear-gradient(90deg,#808080 0 1px,transparent 1px 2px)"></div>
<div style="left:55px;top:473px;width:11px;height:11px;background:#fff;border:1px solid #7f7f7f"></div>
<div style="left:57px;top:478px;width:7px;height:1px;background:#000"></div>
<div class="t" style="left:100px;top:468px;color:#1f1fe6">MAIN</div>
<div style="left:84px;top:503px;width:14px;height:1px;background:repeating-linear-gradient(90deg,#808080 0 1px,transparent 1px 2px)"></div>
<div class="t" style="left:124px;top:493px;color:#1f1fe6">程序本体</div>
<div style="left:84px;top:528px;width:14px;height:1px;background:repeating-linear-gradient(90deg,#808080 0 1px,transparent 1px 2px)"></div>
<div class="t" style="left:124px;top:518px;color:#1f1fe6">局部标签</div>
<div style="left:42px;top:553px;width:8px;height:1px;background:repeating-linear-gradient(90deg,#808080 0 1px,transparent 1px 2px)"></div>
<div style="left:31px;top:548px;width:11px;height:11px;background:#fff;border:1px solid #7f7f7f"></div>
<div style="left:33px;top:553px;width:7px;height:1px;background:#000"></div>
<div class="t" style="left:76px;top:543px;color:#000">FB/FUN</div>
<div style="left:66px;top:578px;width:8px;height:1px;background:repeating-linear-gradient(90deg,#808080 0 1px,transparent 1px 2px)"></div>
<div style="left:55px;top:573px;width:11px;height:11px;background:#fff;border:1px solid #7f7f7f"></div>
<div style="left:57px;top:578px;width:7px;height:1px;background:#000"></div>
<div class="t" style="left:100px;top:568px;color:#1f1fe6">FB_工位选择</div>
<div style="left:84px;top:603px;width:14px;height:1px;background:repeating-linear-gradient(90deg,#808080 0 1px,transparent 1px 2px)"></div>
<div class="t" style="left:124px;top:593px;color:#1f1fe6">程序本体</div>
<div style="left:84px;top:628px;width:14px;height:1px;background:repeating-linear-gradient(90deg,#808080 0 1px,transparent 1px 2px)"></div>
<div class="t" style="left:124px;top:618px;color:#1f1fe6">局部标签</div>
<div style="left:36px;top:653px;width:14px;height:1px;background:repeating-linear-gradient(90deg,#808080 0 1px,transparent 1px 2px)"></div>
<div class="t" style="left:76px;top:643px;color:#000">结构体</div>
<div style="left:36px;top:678px;width:14px;height:1px;background:repeating-linear-gradient(90deg,#808080 0 1px,transparent 1px 2px)"></div>
<div class="t" style="left:76px;top:668px;color:#000">局部软元件注释</div>
<div style="left:18px;top:703px;width:8px;height:1px;background:repeating-linear-gradient(90deg,#808080 0 1px,transparent 1px 2px)"></div>
<div style="left:7px;top:698px;width:11px;height:11px;background:#fff;border:1px solid #7f7f7f"></div>
<div style="left:9px;top:703px;width:7px;height:1px;background:#000"></div>
<div style="left:12px;top:700px;width:1px;height:7px;background:#000"></div>
<div class="t" style="left:52px;top:693px;color:#000">软元件存储器</div>
<div style="left:294px;top:142px;width:1115px;height:32px;background:#f2f2f7"></div>
<svg style="position:absolute;left:294px;top:142px;" width="1115" height="36" viewBox="0 0 1115 36"><defs><linearGradient id="tgi" x1="0" y1="0" x2="0" y2="1"><stop offset="0" stop-color="#fbfbfd"/><stop offset="1" stop-color="#dadae8"/></linearGradient><linearGradient id="tga" x1="0" y1="0" x2="0" y2="1"><stop offset="0" stop-color="#fff6ea"/><stop offset=".5" stop-color="#fdd8a8"/><stop offset="1" stop-color="#fcc070"/></linearGradient></defs><path d="M5.5,32.5 L31.5,6.5 Q32.5,5.5 36.5,5.5 L298.5,5.5 Q302.5,5.5 302.5,9.5 L302.5,32.5 Z" fill="url(#tgi)" stroke="#3a64b4" stroke-width="1"/><path d="M303.5,32.5 L303.5,9.5 Q303.5,5.5 307.5,5.5 L562.5,5.5 Q565.5,5.5 567.5,9.5 L544.5,32.5 Z" fill="url(#tgi)" stroke="#3a64b4" stroke-width="1"/><path d="M795.5,32.5 L795.5,10.5 Q795.5,5.5 801.5,5.5 L1022.5,5.5 Q1027.5,5.5 1027.5,9.5 L1027.5,32.5 Z" fill="url(#tgi)" stroke="#3a64b4" stroke-width="1"/><path d="M1029.5,32.5 L1029.5,9.5 Q1029.5,5.5 1034.5,5.5 L1049.5,5.5 L1049.5,32.5 Z" fill="url(#tgi)" stroke="#3a64b4" stroke-width="1"/><path d="M542.5,34.5 L570.5,7.5 Q572.5,5.5 576.5,5.5 L790.5,5.5 Q794.5,5.5 794.5,9.5 L794.5,34.5 Z" fill="url(#tga)"/><path d="M542.5,34.5 L570.5,7.5 Q572.5,5.5 576.5,5.5 L790.5,5.5 Q794.5,5.5 795.5,9.5" fill="none" stroke="#3a64b4" stroke-width="1"/></svg>
<div style="left:1344px;top:142px;width:64px;height:32px;background:linear-gradient(#f0f0f6,#fafafc)"></div>
<div class="t" style="left:357px;top:151px;color:#000">函数/FB标签设置 FB_工位选择 [...</div>
<div class="t" style="left:632px;top:151px;color:#000">FB_工位选择 [FB] 程序本体 [ST]</div>
<div class="t" style="left:895px;top:151px;color:#000;font-weight:bold;-webkit-text-stroke:0">全局标签设置 Global1</div>
<div style="left:1065px;top:151px;width:21px;height:20px;background:#fffdf4;border:1px solid #e8d8b8"></div>
<svg style="position:absolute;left:1069px;top:155px;" width="13" height="12" viewBox="0 0 13 12"><path d="M2 1.5L11 10.5M11 1.5L2 10.5" stroke="#9a9a9a" stroke-width="2"/></svg>
<div class="t" style="left:1124px;top:151px;color:#000">局部标签设置 MAIN [PRG]</div>
<svg style="position:absolute;left:1350px;top:151px;" width="10" height="14" viewBox="0 0 10 14"><path d="M8 1.5V12.5L1.5 7Z" fill="none" stroke="#000" stroke-width="1.2"/></svg>
<svg style="position:absolute;left:1371px;top:151px;" width="10" height="14" viewBox="0 0 10 14"><path d="M2 1V13L8.5 7Z" fill="#000"/></svg>
<svg style="position:absolute;left:1390px;top:152px;" width="13" height="13" viewBox="0 0 13 13"><rect x="1" y="1" width="11" height="2" fill="#000"/><path d="M1 6H12L6.5 12Z" fill="#000"/></svg>
<div style="left:294px;top:174px;width:1115px;height:777px;border:1px solid #3a64b4;background:#f0f0f0"></div>
<div style="left:295px;top:175px;width:1113px;height:775px;border:2px solid #f8c070;border-top-color:#dcb080;border-left-width:1px"></div>
<div style="left:296px;top:177px;width:1px;height:772px;background:#b0a080"></div>
<div style="left:838px;top:174px;width:250px;height:2px;background:#fcc070"></div>
<div style="left:837px;top:176px;width:252px;height:1px;background:#f4bc78"></div>
<div style="left:297px;top:178px;width:1087px;height:551px;background:#fff;overflow:hidden"></div>
<div style="left:298px;top:179px;width:1085px;height:19px;background:#f0f0f0"></div>
<div style="left:298px;top:198px;width:65px;height:531px;background:#f0f0f0"></div>
<div style="left:1098px;top:198px;width:151px;height:531px;background:#c0c0c0"></div>
<div style="left:297px;top:177px;width:1087px;height:2px;background:#787878"></div>
<div style="left:297px;top:177px;width:2px;height:552px;background:#787878"></div>
<div style="left:311px;top:179px;width:1px;height:19px;background:#a8a8a8"></div>
<div style="left:363px;top:179px;width:1px;height:19px;background:#a8a8a8"></div>
<div style="left:564px;top:179px;width:1px;height:19px;background:#a8a8a8"></div>
<div style="left:765px;top:179px;width:1px;height:19px;background:#a8a8a8"></div>
<div style="left:1067px;top:179px;width:1px;height:19px;background:#a8a8a8"></div>
<div style="left:1098px;top:179px;width:1px;height:19px;background:#a8a8a8"></div>
<div style="left:1249px;top:179px;width:1px;height:19px;background:#a8a8a8"></div>
<div style="left:298px;top:198px;width:1085px;height:1px;background:#a8a8a8"></div>
<div style="left:298px;top:218px;width:65px;height:1px;background:#a8a8a8"></div>
<div style="left:363px;top:218px;width:1020px;height:1px;background:#000"></div>
<div style="left:298px;top:238px;width:65px;height:1px;background:#a8a8a8"></div>
<div style="left:363px;top:238px;width:1020px;height:1px;background:#000"></div>
<div style="left:298px;top:258px;width:65px;height:1px;background:#a8a8a8"></div>
<div style="left:363px;top:258px;width:1020px;height:1px;background:#000"></div>
<div style="left:298px;top:278px;width:65px;height:1px;background:#a8a8a8"></div>
<div style="left:363px;top:278px;width:1020px;height:1px;background:#000"></div>
<div style="left:298px;top:298px;width:65px;height:1px;background:#a8a8a8"></div>
<div style="left:363px;top:298px;width:1020px;height:1px;background:#000"></div>
<div style="left:298px;top:318px;width:65px;height:1px;background:#a8a8a8"></div>
<div style="left:363px;top:318px;width:1020px;height:1px;background:#000"></div>
<div style="left:298px;top:338px;width:65px;height:1px;background:#a8a8a8"></div>
<div style="left:363px;top:338px;width:1020px;height:1px;background:#000"></div>
<div style="left:298px;top:358px;width:65px;height:1px;background:#a8a8a8"></div>
<div style="left:363px;top:358px;width:1020px;height:1px;background:#000"></div>
<div style="left:298px;top:378px;width:65px;height:1px;background:#a8a8a8"></div>
<div style="left:363px;top:378px;width:1020px;height:1px;background:#000"></div>
<div style="left:298px;top:398px;width:65px;height:1px;background:#a8a8a8"></div>
<div style="left:363px;top:398px;width:1020px;height:1px;background:#000"></div>
<div style="left:298px;top:418px;width:65px;height:1px;background:#a8a8a8"></div>
<div style="left:363px;top:418px;width:1020px;height:1px;background:#000"></div>
<div style="left:298px;top:438px;width:65px;height:1px;background:#a8a8a8"></div>
<div style="left:363px;top:438px;width:1020px;height:1px;background:#000"></div>
<div style="left:298px;top:458px;width:65px;height:1px;background:#a8a8a8"></div>
<div style="left:363px;top:458px;width:1020px;height:1px;background:#000"></div>
<div style="left:298px;top:478px;width:65px;height:1px;background:#a8a8a8"></div>
<div style="left:363px;top:478px;width:1020px;height:1px;background:#000"></div>
<div style="left:298px;top:498px;width:65px;height:1px;background:#a8a8a8"></div>
<div style="left:363px;top:498px;width:1020px;height:1px;background:#000"></div>
<div style="left:298px;top:518px;width:65px;height:1px;background:#a8a8a8"></div>
<div style="left:363px;top:518px;width:1020px;height:1px;background:#000"></div>
<div style="left:298px;top:538px;width:65px;height:1px;background:#a8a8a8"></div>
<div style="left:363px;top:538px;width:1020px;height:1px;background:#000"></div>
<div style="left:298px;top:558px;width:65px;height:1px;background:#a8a8a8"></div>
<div style="left:363px;top:558px;width:1020px;height:1px;background:#000"></div>
<div style="left:298px;top:578px;width:65px;height:1px;background:#a8a8a8"></div>
<div style="left:363px;top:578px;width:1020px;height:1px;background:#000"></div>
<div style="left:298px;top:598px;width:65px;height:1px;background:#a8a8a8"></div>
<div style="left:363px;top:598px;width:1020px;height:1px;background:#000"></div>
<div style="left:298px;top:618px;width:65px;height:1px;background:#a8a8a8"></div>
<div style="left:363px;top:618px;width:1020px;height:1px;background:#000"></div>
<div style="left:298px;top:638px;width:65px;height:1px;background:#a8a8a8"></div>
<div style="left:363px;top:638px;width:1020px;height:1px;background:#000"></div>
<div style="left:298px;top:658px;width:65px;height:1px;background:#a8a8a8"></div>
<div style="left:363px;top:658px;width:1020px;height:1px;background:#000"></div>
<div style="left:298px;top:678px;width:65px;height:1px;background:#a8a8a8"></div>
<div style="left:363px;top:678px;width:1020px;height:1px;background:#000"></div>
<div style="left:298px;top:698px;width:65px;height:1px;background:#a8a8a8"></div>
<div style="left:363px;top:698px;width:1020px;height:1px;background:#000"></div>
<div style="left:298px;top:718px;width:65px;height:1px;background:#a8a8a8"></div>
<div style="left:363px;top:718px;width:1020px;height:1px;background:#000"></div>
<div style="left:311px;top:198px;width:1px;height:531px;background:#a8a8a8"></div>
<div style="left:363px;top:198px;width:1px;height:531px;background:#a8a8a8"></div>
<div style="left:564px;top:198px;width:1px;height:531px;background:#000"></div>
<div style="left:765px;top:198px;width:1px;height:531px;background:#000"></div>
<div style="left:1098px;top:198px;width:1px;height:531px;background:#000"></div>
<div style="left:1249px;top:198px;width:1px;height:531px;background:#000"></div>
<div class="t" style="left:453px;top:180px;font-size:15px;-webkit-text-stroke:0.1px">类</div>
<div class="t" style="left:641px;top:180px;font-size:15px;-webkit-text-stroke:0.1px">标签名</div>
<div class="t" style="left:885px;top:180px;font-size:15px;-webkit-text-stroke:0.1px">数据类型</div>
<div class="t" style="left:1158px;top:180px;font-size:15px;-webkit-text-stroke:0.1px">常量</div>
<div class="t" style="left:1302px;top:180px;font-size:15px;-webkit-text-stroke:0.1px">软元件</div>
<div class="t" style="left:332.85px;top:199px;font-size:15px">1</div>
<div style="left:544px;top:199px;width:20px;height:19px;background:#f0f0f0;border-right:1px solid #696969;border-bottom:1px solid #696969;box-shadow:inset 1px 1px 0 #fff,inset -1px -1px 0 #a0a0a0"></div>
<div class="tri" style="left:549px;top:208px;border-left-width:4.5px;border-right-width:4.5px;border-top-width:5px"></div>
<div style="left:1067px;top:199px;width:31px;height:19px;background:#f0f0f0;border-right:1px solid #696969;border-bottom:1px solid #696969;box-shadow:inset 1px 1px 0 #fff,inset -1px -1px 0 #a0a0a0"></div>
<div style="left:1079px;top:213px;width:2px;height:2px;background:#3a3a3a"></div>
<div style="left:1083px;top:213px;width:2px;height:2px;background:#3a3a3a"></div>
<div style="left:1087px;top:213px;width:2px;height:2px;background:#3a3a3a"></div>
<div class="t" style="left:332.85px;top:219px;font-size:15px">2</div>
<div style="left:544px;top:219px;width:20px;height:19px;background:#f0f0f0;border-right:1px solid #696969;border-bottom:1px solid #696969;box-shadow:inset 1px 1px 0 #fff,inset -1px -1px 0 #a0a0a0"></div>
<div class="tri" style="left:549px;top:228px;border-left-width:4.5px;border-right-width:4.5px;border-top-width:5px"></div>
<div style="left:1067px;top:219px;width:31px;height:19px;background:#f0f0f0;border-right:1px solid #696969;border-bottom:1px solid #696969;box-shadow:inset 1px 1px 0 #fff,inset -1px -1px 0 #a0a0a0"></div>
<div style="left:1079px;top:233px;width:2px;height:2px;background:#3a3a3a"></div>
<div style="left:1083px;top:233px;width:2px;height:2px;background:#3a3a3a"></div>
<div style="left:1087px;top:233px;width:2px;height:2px;background:#3a3a3a"></div>
<div class="t" style="left:332.85px;top:239px;font-size:15px">3</div>
<div style="left:544px;top:239px;width:20px;height:19px;background:#f0f0f0;border-right:1px solid #696969;border-bottom:1px solid #696969;box-shadow:inset 1px 1px 0 #fff,inset -1px -1px 0 #a0a0a0"></div>
<div class="tri" style="left:549px;top:248px;border-left-width:4.5px;border-right-width:4.5px;border-top-width:5px"></div>
<div style="left:1067px;top:239px;width:31px;height:19px;background:#f0f0f0;border-right:1px solid #696969;border-bottom:1px solid #696969;box-shadow:inset 1px 1px 0 #fff,inset -1px -1px 0 #a0a0a0"></div>
<div style="left:1079px;top:253px;width:2px;height:2px;background:#3a3a3a"></div>
<div style="left:1083px;top:253px;width:2px;height:2px;background:#3a3a3a"></div>
<div style="left:1087px;top:253px;width:2px;height:2px;background:#3a3a3a"></div>
<div class="t" style="left:332.85px;top:259px;font-size:15px">4</div>
<div style="left:544px;top:259px;width:20px;height:19px;background:#f0f0f0;border-right:1px solid #696969;border-bottom:1px solid #696969;box-shadow:inset 1px 1px 0 #fff,inset -1px -1px 0 #a0a0a0"></div>
<div class="tri" style="left:549px;top:268px;border-left-width:4.5px;border-right-width:4.5px;border-top-width:5px"></div>
<div style="left:1067px;top:259px;width:31px;height:19px;background:#f0f0f0;border-right:1px solid #696969;border-bottom:1px solid #696969;box-shadow:inset 1px 1px 0 #fff,inset -1px -1px 0 #a0a0a0"></div>
<div style="left:1079px;top:273px;width:2px;height:2px;background:#3a3a3a"></div>
<div style="left:1083px;top:273px;width:2px;height:2px;background:#3a3a3a"></div>
<div style="left:1087px;top:273px;width:2px;height:2px;background:#3a3a3a"></div>
<div class="t" style="left:332.85px;top:279px;font-size:15px">5</div>
<div style="left:544px;top:279px;width:20px;height:19px;background:#f0f0f0;border-right:1px solid #696969;border-bottom:1px solid #696969;box-shadow:inset 1px 1px 0 #fff,inset -1px -1px 0 #a0a0a0"></div>
<div class="tri" style="left:549px;top:288px;border-left-width:4.5px;border-right-width:4.5px;border-top-width:5px"></div>
<div style="left:1067px;top:279px;width:31px;height:19px;background:#f0f0f0;border-right:1px solid #696969;border-bottom:1px solid #696969;box-shadow:inset 1px 1px 0 #fff,inset -1px -1px 0 #a0a0a0"></div>
<div style="left:1079px;top:293px;width:2px;height:2px;background:#3a3a3a"></div>
<div style="left:1083px;top:293px;width:2px;height:2px;background:#3a3a3a"></div>
<div style="left:1087px;top:293px;width:2px;height:2px;background:#3a3a3a"></div>
<div class="t" style="left:332.85px;top:299px;font-size:15px">6</div>
<div style="left:544px;top:299px;width:20px;height:19px;background:#f0f0f0;border-right:1px solid #696969;border-bottom:1px solid #696969;box-shadow:inset 1px 1px 0 #fff,inset -1px -1px 0 #a0a0a0"></div>
<div class="tri" style="left:549px;top:308px;border-left-width:4.5px;border-right-width:4.5px;border-top-width:5px"></div>
<div style="left:1067px;top:299px;width:31px;height:19px;background:#f0f0f0;border-right:1px solid #696969;border-bottom:1px solid #696969;box-shadow:inset 1px 1px 0 #fff,inset -1px -1px 0 #a0a0a0"></div>
<div style="left:1079px;top:313px;width:2px;height:2px;background:#3a3a3a"></div>
<div style="left:1083px;top:313px;width:2px;height:2px;background:#3a3a3a"></div>
<div style="left:1087px;top:313px;width:2px;height:2px;background:#3a3a3a"></div>
<div class="t" style="left:332.85px;top:319px;font-size:15px">7</div>
<div style="left:544px;top:319px;width:20px;height:19px;background:#f0f0f0;border-right:1px solid #696969;border-bottom:1px solid #696969;box-shadow:inset 1px 1px 0 #fff,inset -1px -1px 0 #a0a0a0"></div>
<div class="tri" style="left:549px;top:328px;border-left-width:4.5px;border-right-width:4.5px;border-top-width:5px"></div>
<div style="left:1067px;top:319px;width:31px;height:19px;background:#f0f0f0;border-right:1px solid #696969;border-bottom:1px solid #696969;box-shadow:inset 1px 1px 0 #fff,inset -1px -1px 0 #a0a0a0"></div>
<div style="left:1079px;top:333px;width:2px;height:2px;background:#3a3a3a"></div>
<div style="left:1083px;top:333px;width:2px;height:2px;background:#3a3a3a"></div>
<div style="left:1087px;top:333px;width:2px;height:2px;background:#3a3a3a"></div>
<div class="t" style="left:332.85px;top:339px;font-size:15px">8</div>
<div style="left:544px;top:339px;width:20px;height:19px;background:#f0f0f0;border-right:1px solid #696969;border-bottom:1px solid #696969;box-shadow:inset 1px 1px 0 #fff,inset -1px -1px 0 #a0a0a0"></div>
<div class="tri" style="left:549px;top:348px;border-left-width:4.5px;border-right-width:4.5px;border-top-width:5px"></div>
<div style="left:1067px;top:339px;width:31px;height:19px;background:#f0f0f0;border-right:1px solid #696969;border-bottom:1px solid #696969;box-shadow:inset 1px 1px 0 #fff,inset -1px -1px 0 #a0a0a0"></div>
<div style="left:1079px;top:353px;width:2px;height:2px;background:#3a3a3a"></div>
<div style="left:1083px;top:353px;width:2px;height:2px;background:#3a3a3a"></div>
<div style="left:1087px;top:353px;width:2px;height:2px;background:#3a3a3a"></div>
<div class="t" style="left:332.85px;top:359px;font-size:15px">9</div>
<div style="left:544px;top:359px;width:20px;height:19px;background:#f0f0f0;border-right:1px solid #696969;border-bottom:1px solid #696969;box-shadow:inset 1px 1px 0 #fff,inset -1px -1px 0 #a0a0a0"></div>
<div class="tri" style="left:549px;top:368px;border-left-width:4.5px;border-right-width:4.5px;border-top-width:5px"></div>
<div style="left:1067px;top:359px;width:31px;height:19px;background:#f0f0f0;border-right:1px solid #696969;border-bottom:1px solid #696969;box-shadow:inset 1px 1px 0 #fff,inset -1px -1px 0 #a0a0a0"></div>
<div style="left:1079px;top:373px;width:2px;height:2px;background:#3a3a3a"></div>
<div style="left:1083px;top:373px;width:2px;height:2px;background:#3a3a3a"></div>
<div style="left:1087px;top:373px;width:2px;height:2px;background:#3a3a3a"></div>
<div class="t" style="left:328.7px;top:379px;font-size:15px">10</div>
<div style="left:544px;top:379px;width:20px;height:19px;background:#f0f0f0;border-right:1px solid #696969;border-bottom:1px solid #696969;box-shadow:inset 1px 1px 0 #fff,inset -1px -1px 0 #a0a0a0"></div>
<div class="tri" style="left:549px;top:388px;border-left-width:4.5px;border-right-width:4.5px;border-top-width:5px"></div>
<div style="left:1067px;top:379px;width:31px;height:19px;background:#f0f0f0;border-right:1px solid #696969;border-bottom:1px solid #696969;box-shadow:inset 1px 1px 0 #fff,inset -1px -1px 0 #a0a0a0"></div>
<div style="left:1079px;top:393px;width:2px;height:2px;background:#3a3a3a"></div>
<div style="left:1083px;top:393px;width:2px;height:2px;background:#3a3a3a"></div>
<div style="left:1087px;top:393px;width:2px;height:2px;background:#3a3a3a"></div>
<div class="t" style="left:328.7px;top:399px;font-size:15px">11</div>
<div style="left:544px;top:399px;width:20px;height:19px;background:#f0f0f0;border-right:1px solid #696969;border-bottom:1px solid #696969;box-shadow:inset 1px 1px 0 #fff,inset -1px -1px 0 #a0a0a0"></div>
<div class="tri" style="left:549px;top:408px;border-left-width:4.5px;border-right-width:4.5px;border-top-width:5px"></div>
<div style="left:1067px;top:399px;width:31px;height:19px;background:#f0f0f0;border-right:1px solid #696969;border-bottom:1px solid #696969;box-shadow:inset 1px 1px 0 #fff,inset -1px -1px 0 #a0a0a0"></div>
<div style="left:1079px;top:413px;width:2px;height:2px;background:#3a3a3a"></div>
<div style="left:1083px;top:413px;width:2px;height:2px;background:#3a3a3a"></div>
<div style="left:1087px;top:413px;width:2px;height:2px;background:#3a3a3a"></div>
<div class="t" style="left:328.7px;top:419px;font-size:15px">12</div>
<div style="left:544px;top:419px;width:20px;height:19px;background:#f0f0f0;border-right:1px solid #696969;border-bottom:1px solid #696969;box-shadow:inset 1px 1px 0 #fff,inset -1px -1px 0 #a0a0a0"></div>
<div class="tri" style="left:549px;top:428px;border-left-width:4.5px;border-right-width:4.5px;border-top-width:5px"></div>
<div style="left:1067px;top:419px;width:31px;height:19px;background:#f0f0f0;border-right:1px solid #696969;border-bottom:1px solid #696969;box-shadow:inset 1px 1px 0 #fff,inset -1px -1px 0 #a0a0a0"></div>
<div style="left:1079px;top:433px;width:2px;height:2px;background:#3a3a3a"></div>
<div style="left:1083px;top:433px;width:2px;height:2px;background:#3a3a3a"></div>
<div style="left:1087px;top:433px;width:2px;height:2px;background:#3a3a3a"></div>
<div class="t" style="left:328.7px;top:439px;font-size:15px">13</div>
<div style="left:544px;top:439px;width:20px;height:19px;background:#f0f0f0;border-right:1px solid #696969;border-bottom:1px solid #696969;box-shadow:inset 1px 1px 0 #fff,inset -1px -1px 0 #a0a0a0"></div>
<div class="tri" style="left:549px;top:448px;border-left-width:4.5px;border-right-width:4.5px;border-top-width:5px"></div>
<div style="left:1067px;top:439px;width:31px;height:19px;background:#f0f0f0;border-right:1px solid #696969;border-bottom:1px solid #696969;box-shadow:inset 1px 1px 0 #fff,inset -1px -1px 0 #a0a0a0"></div>
<div style="left:1079px;top:453px;width:2px;height:2px;background:#3a3a3a"></div>
<div style="left:1083px;top:453px;width:2px;height:2px;background:#3a3a3a"></div>
<div style="left:1087px;top:453px;width:2px;height:2px;background:#3a3a3a"></div>
<div class="t" style="left:328.7px;top:459px;font-size:15px">14</div>
<div style="left:544px;top:459px;width:20px;height:19px;background:#f0f0f0;border-right:1px solid #696969;border-bottom:1px solid #696969;box-shadow:inset 1px 1px 0 #fff,inset -1px -1px 0 #a0a0a0"></div>
<div class="tri" style="left:549px;top:468px;border-left-width:4.5px;border-right-width:4.5px;border-top-width:5px"></div>
<div style="left:1067px;top:459px;width:31px;height:19px;background:#f0f0f0;border-right:1px solid #696969;border-bottom:1px solid #696969;box-shadow:inset 1px 1px 0 #fff,inset -1px -1px 0 #a0a0a0"></div>
<div style="left:1079px;top:473px;width:2px;height:2px;background:#3a3a3a"></div>
<div style="left:1083px;top:473px;width:2px;height:2px;background:#3a3a3a"></div>
<div style="left:1087px;top:473px;width:2px;height:2px;background:#3a3a3a"></div>
<div class="t" style="left:328.7px;top:479px;font-size:15px">15</div>
<div style="left:544px;top:479px;width:20px;height:19px;background:#f0f0f0;border-right:1px solid #696969;border-bottom:1px solid #696969;box-shadow:inset 1px 1px 0 #fff,inset -1px -1px 0 #a0a0a0"></div>
<div class="tri" style="left:549px;top:488px;border-left-width:4.5px;border-right-width:4.5px;border-top-width:5px"></div>
<div style="left:1067px;top:479px;width:31px;height:19px;background:#f0f0f0;border-right:1px solid #696969;border-bottom:1px solid #696969;box-shadow:inset 1px 1px 0 #fff,inset -1px -1px 0 #a0a0a0"></div>
<div style="left:1079px;top:493px;width:2px;height:2px;background:#3a3a3a"></div>
<div style="left:1083px;top:493px;width:2px;height:2px;background:#3a3a3a"></div>
<div style="left:1087px;top:493px;width:2px;height:2px;background:#3a3a3a"></div>
<div class="t" style="left:328.7px;top:499px;font-size:15px">16</div>
<div style="left:544px;top:499px;width:20px;height:19px;background:#f0f0f0;border-right:1px solid #696969;border-bottom:1px solid #696969;box-shadow:inset 1px 1px 0 #fff,inset -1px -1px 0 #a0a0a0"></div>
<div class="tri" style="left:549px;top:508px;border-left-width:4.5px;border-right-width:4.5px;border-top-width:5px"></div>
<div style="left:1067px;top:499px;width:31px;height:19px;background:#f0f0f0;border-right:1px solid #696969;border-bottom:1px solid #696969;box-shadow:inset 1px 1px 0 #fff,inset -1px -1px 0 #a0a0a0"></div>
<div style="left:1079px;top:513px;width:2px;height:2px;background:#3a3a3a"></div>
<div style="left:1083px;top:513px;width:2px;height:2px;background:#3a3a3a"></div>
<div style="left:1087px;top:513px;width:2px;height:2px;background:#3a3a3a"></div>
<div class="t" style="left:328.7px;top:519px;font-size:15px">17</div>
<div style="left:544px;top:519px;width:20px;height:19px;background:#f0f0f0;border-right:1px solid #696969;border-bottom:1px solid #696969;box-shadow:inset 1px 1px 0 #fff,inset -1px -1px 0 #a0a0a0"></div>
<div class="tri" style="left:549px;top:528px;border-left-width:4.5px;border-right-width:4.5px;border-top-width:5px"></div>
<div style="left:1067px;top:519px;width:31px;height:19px;background:#f0f0f0;border-right:1px solid #696969;border-bottom:1px solid #696969;box-shadow:inset 1px 1px 0 #fff,inset -1px -1px 0 #a0a0a0"></div>
<div style="left:1079px;top:533px;width:2px;height:2px;background:#3a3a3a"></div>
<div style="left:1083px;top:533px;width:2px;height:2px;background:#3a3a3a"></div>
<div style="left:1087px;top:533px;width:2px;height:2px;background:#3a3a3a"></div>
<div class="t" style="left:328.7px;top:539px;font-size:15px">18</div>
<div style="left:544px;top:539px;width:20px;height:19px;background:#f0f0f0;border-right:1px solid #696969;border-bottom:1px solid #696969;box-shadow:inset 1px 1px 0 #fff,inset -1px -1px 0 #a0a0a0"></div>
<div class="tri" style="left:549px;top:548px;border-left-width:4.5px;border-right-width:4.5px;border-top-width:5px"></div>
<div style="left:1067px;top:539px;width:31px;height:19px;background:#f0f0f0;border-right:1px solid #696969;border-bottom:1px solid #696969;box-shadow:inset 1px 1px 0 #fff,inset -1px -1px 0 #a0a0a0"></div>
<div style="left:1079px;top:553px;width:2px;height:2px;background:#3a3a3a"></div>
<div style="left:1083px;top:553px;width:2px;height:2px;background:#3a3a3a"></div>
<div style="left:1087px;top:553px;width:2px;height:2px;background:#3a3a3a"></div>
<div class="t" style="left:328.7px;top:559px;font-size:15px">19</div>
<div style="left:544px;top:559px;width:20px;height:19px;background:#f0f0f0;border-right:1px solid #696969;border-bottom:1px solid #696969;box-shadow:inset 1px 1px 0 #fff,inset -1px -1px 0 #a0a0a0"></div>
<div class="tri" style="left:549px;top:568px;border-left-width:4.5px;border-right-width:4.5px;border-top-width:5px"></div>
<div style="left:1067px;top:559px;width:31px;height:19px;background:#f0f0f0;border-right:1px solid #696969;border-bottom:1px solid #696969;box-shadow:inset 1px 1px 0 #fff,inset -1px -1px 0 #a0a0a0"></div>
<div style="left:1079px;top:573px;width:2px;height:2px;background:#3a3a3a"></div>
<div style="left:1083px;top:573px;width:2px;height:2px;background:#3a3a3a"></div>
<div style="left:1087px;top:573px;width:2px;height:2px;background:#3a3a3a"></div>
<div class="t" style="left:328.7px;top:579px;font-size:15px">20</div>
<div style="left:544px;top:579px;width:20px;height:19px;background:#f0f0f0;border-right:1px solid #696969;border-bottom:1px solid #696969;box-shadow:inset 1px 1px 0 #fff,inset -1px -1px 0 #a0a0a0"></div>
<div class="tri" style="left:549px;top:588px;border-left-width:4.5px;border-right-width:4.5px;border-top-width:5px"></div>
<div style="left:1067px;top:579px;width:31px;height:19px;background:#f0f0f0;border-right:1px solid #696969;border-bottom:1px solid #696969;box-shadow:inset 1px 1px 0 #fff,inset -1px -1px 0 #a0a0a0"></div>
<div style="left:1079px;top:593px;width:2px;height:2px;background:#3a3a3a"></div>
<div style="left:1083px;top:593px;width:2px;height:2px;background:#3a3a3a"></div>
<div style="left:1087px;top:593px;width:2px;height:2px;background:#3a3a3a"></div>
<div class="t" style="left:328.7px;top:599px;font-size:15px">21</div>
<div style="left:544px;top:599px;width:20px;height:19px;background:#f0f0f0;border-right:1px solid #696969;border-bottom:1px solid #696969;box-shadow:inset 1px 1px 0 #fff,inset -1px -1px 0 #a0a0a0"></div>
<div class="tri" style="left:549px;top:608px;border-left-width:4.5px;border-right-width:4.5px;border-top-width:5px"></div>
<div style="left:1067px;top:599px;width:31px;height:19px;background:#f0f0f0;border-right:1px solid #696969;border-bottom:1px solid #696969;box-shadow:inset 1px 1px 0 #fff,inset -1px -1px 0 #a0a0a0"></div>
<div style="left:1079px;top:613px;width:2px;height:2px;background:#3a3a3a"></div>
<div style="left:1083px;top:613px;width:2px;height:2px;background:#3a3a3a"></div>
<div style="left:1087px;top:613px;width:2px;height:2px;background:#3a3a3a"></div>
<div class="t" style="left:328.7px;top:619px;font-size:15px">22</div>
<div style="left:544px;top:619px;width:20px;height:19px;background:#f0f0f0;border-right:1px solid #696969;border-bottom:1px solid #696969;box-shadow:inset 1px 1px 0 #fff,inset -1px -1px 0 #a0a0a0"></div>
<div class="tri" style="left:549px;top:628px;border-left-width:4.5px;border-right-width:4.5px;border-top-width:5px"></div>
<div style="left:1067px;top:619px;width:31px;height:19px;background:#f0f0f0;border-right:1px solid #696969;border-bottom:1px solid #696969;box-shadow:inset 1px 1px 0 #fff,inset -1px -1px 0 #a0a0a0"></div>
<div style="left:1079px;top:633px;width:2px;height:2px;background:#3a3a3a"></div>
<div style="left:1083px;top:633px;width:2px;height:2px;background:#3a3a3a"></div>
<div style="left:1087px;top:633px;width:2px;height:2px;background:#3a3a3a"></div>
<div class="t" style="left:328.7px;top:639px;font-size:15px">23</div>
<div style="left:544px;top:639px;width:20px;height:19px;background:#f0f0f0;border-right:1px solid #696969;border-bottom:1px solid #696969;box-shadow:inset 1px 1px 0 #fff,inset -1px -1px 0 #a0a0a0"></div>
<div class="tri" style="left:549px;top:648px;border-left-width:4.5px;border-right-width:4.5px;border-top-width:5px"></div>
<div style="left:1067px;top:639px;width:31px;height:19px;background:#f0f0f0;border-right:1px solid #696969;border-bottom:1px solid #696969;box-shadow:inset 1px 1px 0 #fff,inset -1px -1px 0 #a0a0a0"></div>
<div style="left:1079px;top:653px;width:2px;height:2px;background:#3a3a3a"></div>
<div style="left:1083px;top:653px;width:2px;height:2px;background:#3a3a3a"></div>
<div style="left:1087px;top:653px;width:2px;height:2px;background:#3a3a3a"></div>
<div class="t" style="left:328.7px;top:659px;font-size:15px">24</div>
<div style="left:544px;top:659px;width:20px;height:19px;background:#f0f0f0;border-right:1px solid #696969;border-bottom:1px solid #696969;box-shadow:inset 1px 1px 0 #fff,inset -1px -1px 0 #a0a0a0"></div>
<div class="tri" style="left:549px;top:668px;border-left-width:4.5px;border-right-width:4.5px;border-top-width:5px"></div>
<div style="left:1067px;top:659px;width:31px;height:19px;background:#f0f0f0;border-right:1px solid #696969;border-bottom:1px solid #696969;box-shadow:inset 1px 1px 0 #fff,inset -1px -1px 0 #a0a0a0"></div>
<div style="left:1079px;top:673px;width:2px;height:2px;background:#3a3a3a"></div>
<div style="left:1083px;top:673px;width:2px;height:2px;background:#3a3a3a"></div>
<div style="left:1087px;top:673px;width:2px;height:2px;background:#3a3a3a"></div>
<div class="t" style="left:328.7px;top:679px;font-size:15px">25</div>
<div style="left:544px;top:679px;width:20px;height:19px;background:#f0f0f0;border-right:1px solid #696969;border-bottom:1px solid #696969;box-shadow:inset 1px 1px 0 #fff,inset -1px -1px 0 #a0a0a0"></div>
<div class="tri" style="left:549px;top:688px;border-left-width:4.5px;border-right-width:4.5px;border-top-width:5px"></div>
<div style="left:1067px;top:679px;width:31px;height:19px;background:#f0f0f0;border-right:1px solid #696969;border-bottom:1px solid #696969;box-shadow:inset 1px 1px 0 #fff,inset -1px -1px 0 #a0a0a0"></div>
<div style="left:1079px;top:693px;width:2px;height:2px;background:#3a3a3a"></div>
<div style="left:1083px;top:693px;width:2px;height:2px;background:#3a3a3a"></div>
<div style="left:1087px;top:693px;width:2px;height:2px;background:#3a3a3a"></div>
<div class="t" style="left:328.7px;top:699px;font-size:15px">26</div>
<div style="left:544px;top:699px;width:20px;height:19px;background:#f0f0f0;border-right:1px solid #696969;border-bottom:1px solid #696969;box-shadow:inset 1px 1px 0 #fff,inset -1px -1px 0 #a0a0a0"></div>
<div class="tri" style="left:549px;top:708px;border-left-width:4.5px;border-right-width:4.5px;border-top-width:5px"></div>
<div style="left:1067px;top:699px;width:31px;height:19px;background:#f0f0f0;border-right:1px solid #696969;border-bottom:1px solid #696969;box-shadow:inset 1px 1px 0 #fff,inset -1px -1px 0 #a0a0a0"></div>
<div style="left:1079px;top:713px;width:2px;height:2px;background:#3a3a3a"></div>
<div style="left:1083px;top:713px;width:2px;height:2px;background:#3a3a3a"></div>
<div style="left:1087px;top:713px;width:2px;height:2px;background:#3a3a3a"></div>
<div class="t" style="left:328.7px;top:719px;font-size:15px">27</div>
<div style="left:544px;top:719px;width:20px;height:19px;background:#f0f0f0;border-right:1px solid #696969;border-bottom:1px solid #696969;box-shadow:inset 1px 1px 0 #fff,inset -1px -1px 0 #a0a0a0"></div>
<div class="tri" style="left:549px;top:728px;border-left-width:4.5px;border-right-width:4.5px;border-top-width:5px"></div>
<div style="left:1067px;top:719px;width:31px;height:19px;background:#f0f0f0;border-right:1px solid #696969;border-bottom:1px solid #696969;box-shadow:inset 1px 1px 0 #fff,inset -1px -1px 0 #a0a0a0"></div>
<div style="left:1079px;top:733px;width:2px;height:2px;background:#3a3a3a"></div>
<div style="left:1083px;top:733px;width:2px;height:2px;background:#3a3a3a"></div>
<div style="left:1087px;top:733px;width:2px;height:2px;background:#3a3a3a"></div>
<div class="t" style="left:366px;top:198px;font-size:16.5px;transform:scaleX(0.806);transform-origin:0 0">VAR_GLOBAL</div>
<div class="t" style="left:567px;top:199px;font-size:15px">gb_缓存</div>
<div class="t" style="left:768px;top:199px;font-size:13.5px;letter-spacing:-0.3px">Bit(0..15)</div>
<div style="left:764px;top:257px;width:303px;height:23px;border:1px solid #3a3a3a"></div>
<div style="left:765px;top:258px;width:301px;height:21px;border:1px solid #fff"></div>
<div style="left:766px;top:259px;width:299px;height:19px;border:1px solid #111;box-shadow:inset 1px 1px 0 #444,inset -1px -1px 0 #444;background:#fff"></div>
<div style="left:1383px;top:178px;width:21px;height:551px;background:repeating-conic-gradient(#fff 0 25%,#ececec 0 50%) 0 0/2px 2px"></div>
<div style="left:1384px;top:179px;width:20px;height:20px;background:#f0f0f0;border-right:1px solid #696969;border-bottom:1px solid #696969;box-shadow:inset 1px 1px 0 #fff,inset -1px -1px 0 #a0a0a0"></div>
<svg style="position:absolute;left:1389px;top:185px;" width="10" height="7" viewBox="0 0 10 7"><path d="M0.5 6.5H9.5L5 1Z" fill="#000"/></svg>
<div style="left:1384px;top:199px;width:20px;height:13px;background:#f0f0f0;border-right:1px solid #696969;border-bottom:1px solid #696969;box-shadow:inset 1px 1px 0 #fff,inset -1px -1px 0 #a0a0a0"></div>
<div style="left:1384px;top:709px;width:20px;height:21px;background:#f0f0f0;border-right:1px solid #696969;border-bottom:1px solid #696969;box-shadow:inset 1px 1px 0 #fff,inset -1px -1px 0 #a0a0a0"></div>
<svg style="position:absolute;left:1389px;top:716px;" width="10" height="7" viewBox="0 0 10 7"><path d="M0.5 0.5H9.5L5 6Z" fill="#000"/></svg>
<div style="left:298px;top:729px;width:1086px;height:21px;background:repeating-conic-gradient(#fff 0 25%,#ececec 0 50%) 0 0/2px 2px"></div>
<div style="left:299px;top:729px;width:20px;height:21px;background:#f0f0f0;border-right:1px solid #696969;border-bottom:1px solid #696969;box-shadow:inset 1px 1px 0 #fff,inset -1px -1px 0 #a0a0a0"></div>
<svg style="position:absolute;left:303px;top:734px;" width="8" height="10" viewBox="0 0 8 10"><path d="M6.5 0.5V9.5L1 5Z" fill="#000"/></svg>
<div style="left:319px;top:729px;width:347px;height:21px;background:#f0f0f0;border-right:1px solid #696969;border-bottom:1px solid #696969;box-shadow:inset 1px 1px 0 #fff,inset -1px -1px 0 #a0a0a0"></div>
<div style="left:1363px;top:729px;width:21px;height:21px;background:#f0f0f0;border-right:1px solid #696969;border-bottom:1px solid #696969;box-shadow:inset 1px 1px 0 #fff,inset -1px -1px 0 #a0a0a0"></div>
<svg style="position:absolute;left:1371px;top:734px;" width="8" height="10" viewBox="0 0 8 10"><path d="M1 0.5V9.5L6.5 5Z" fill="#000"/></svg>
<div style="left:1384px;top:730px;width:20px;height:20px;background:#c4c4c4"></div>
<div style="left:1404px;top:178px;width:1px;height:772px;background:#f0f0f0"></div>
<div style="left:297px;top:177px;width:2px;height:770px;background:#808080"></div>
<div style="left:298px;top:750px;width:1106px;height:37px;background:#f0f0f0"></div>
<div style="left:302px;top:755px;width:18px;height:18px;background:#ffffc8;border:1px solid #333"></div>
<div class="t" style="left:329px;top:755px;font-size:15px;color:#111;-webkit-text-stroke:0">正在预约登录系统标签。</div>
<div style="left:626px;top:755px;width:18px;height:18px;background:#ffff99;border:1px solid #333"></div>
<div class="t" style="left:653px;top:755px;font-size:15px;color:#111;-webkit-text-stroke:0">正在预约解除系统标签。</div>
<div style="left:956px;top:755px;width:18px;height:18px;background:#cceeff;border:1px solid #333"></div>
<div class="t" style="left:983px;top:755px;font-size:15px;color:#111;-webkit-text-stroke:0">已反映至系统标签数据库。</div>
<div style="left:298px;top:786px;width:1106px;height:1px;background:#a8a8a8"></div>
<div style="left:298px;top:787px;width:1106px;height:1px;background:#fff"></div>
<div style="left:311px;top:799px;width:471px;height:103px;border:1px solid #a0a0a0;border-right-color:#fff;border-bottom-color:#fff"></div>
<div class="t" style="left:312px;top:801.0px;font-size:15px;line-height:18px;color:#111;-webkit-text-stroke:0">要确定预约登录/解除系统标签，</div>
<div class="t" style="left:312px;top:818.6px;font-size:15px;line-height:18px;color:#111;-webkit-text-stroke:0">需要反映至系统标签数据库。</div>
<div class="t" style="left:312px;top:836.2px;font-size:15px;line-height:18px;color:#111;-webkit-text-stroke:0">请执行"反映至系统标签数据库"。</div>
<div class="t" style="left:312px;top:853.8px;font-size:15px;line-height:18px;color:#111;-webkit-text-stroke:0">※执行RUN中写入时，请执行RUN中写入和保存。</div>
<div style="left:832px;top:799px;width:252px;height:29px;background:#f0f0f0;border:1px solid #fff;border-right-color:#6a6a6a;border-bottom-color:#6a6a6a;box-shadow:inset -1px -1px 0 #a0a0a0"></div>
<div class="t" style="left:832px;top:803px;width:252px;text-align:center;color:#a0a0a0;-webkit-text-stroke:0;">预约登录系统标签</div>
<div style="left:832px;top:837px;width:252px;height:28px;background:#f0f0f0;border:1px solid #fff;border-right-color:#6a6a6a;border-bottom-color:#6a6a6a;box-shadow:inset -1px -1px 0 #a0a0a0"></div>
<div class="t" style="left:832px;top:841px;width:252px;text-align:center;color:#a0a0a0;-webkit-text-stroke:0;">预约解除系统标签</div>
<div style="left:832px;top:874px;width:252px;height:28px;background:#f0f0f0;border:1px solid #fff;border-right-color:#6a6a6a;border-bottom-color:#6a6a6a;box-shadow:inset -1px -1px 0 #a0a0a0"></div>
<div class="t" style="left:832px;top:878px;width:252px;text-align:center;color:#a0a0a0;-webkit-text-stroke:0;">获取系统标签</div>
<div style="left:1278px;top:799px;width:120px;height:103px;background:#f0f0f0;border:1px solid #fff;border-right-color:#6a6a6a;border-bottom-color:#6a6a6a;box-shadow:inset -1px -1px 0 #a0a0a0"></div>
<div class="t" style="left:1298px;top:832px;font-size:15px;color:#a0a0a0;line-height:18px;-webkit-text-stroke:0">反映至系统</div>
<div class="t" style="left:1298px;top:850px;font-size:15px;color:#a0a0a0;line-height:18px;-webkit-text-stroke:0">标签数据库</div>
<div class="t" style="left:1128px;top:867px;font-size:15px;color:#111;line-height:18px;-webkit-text-stroke:0">未反映：0件</div>
<div class="t" style="left:1128px;top:885px;font-size:15px;color:#111;line-height:18px;-webkit-text-stroke:0">全部：0件</div>
<svg style="position:absolute;left:1108px;top:806px;" width="146" height="38" viewBox="0 0 146 38"><defs><linearGradient id="dbg" x1="0" y1="0" x2="1" y2="0"><stop offset="0" stop-color="#d8d8d8"/><stop offset=".35" stop-color="#fafafa"/><stop offset="1" stop-color="#a8a8a8"/></linearGradient><linearGradient id="scg" x1="0" y1="0" x2="1" y2="1"><stop offset="0" stop-color="#a8d4fc"/><stop offset="1" stop-color="#3a8ae0"/></linearGradient></defs><rect x="1" y="2" width="36" height="26" fill="#333"/><rect x="3" y="4" width="32" height="22" fill="#c8c8c8"/><rect x="5" y="6" width="27" height="18" fill="#1a3a6a"/><rect x="6" y="7" width="25" height="16" fill="url(#scg)"/><rect x="13" y="28" width="12" height="3" fill="#333"/><rect x="4" y="31" width="26" height="3" fill="#333"/><path d="M26 12H37L45 20V36H26Z" fill="#fff" stroke="#1a1010" stroke-width="2"/><path d="M37 12V20H45" fill="none" stroke="#1a1010" stroke-width="2"/><path d="M52.5 16.5H92V8L103 20L92 32V23.5H52.5Z" fill="#88bc88" stroke="#3a8a3a"/><path d="M111 10C111 3 142 3 142 10V30C142 37 111 37 111 30Z" fill="url(#dbg)" stroke="#2a2a2a" stroke-width="2"/><path d="M111 10C111 15 142 15 142 10" fill="none" stroke="#bbb" stroke-width="1"/></svg>
<div style="left:298px;top:926px;width:1106px;height:21px;background:#f0f0f0"></div>
<div style="left:320px;top:927px;width:1040px;height:19px;background:#cccccc"></div>
<svg style="position:absolute;left:303px;top:930px;" width="10" height="14" viewBox="0 0 10 14"><path d="M8 2L3 7L8 12" stroke="#444" stroke-width="2" fill="none"/></svg>
<svg style="position:absolute;left:1387px;top:930px;" width="10" height="14" viewBox="0 0 10 14"><path d="M2 2L7 7L2 12" stroke="#444" stroke-width="2" fill="none"/></svg>
<div style="left:1px;top:951px;width:1408px;height:5px;background:#e6e6f0"></div>
<div style="left:2px;top:956px;width:1406px;height:34px;background:linear-gradient(#f6f6fb 0%,#ededf5 40%,#c8c8da 80%,#a8a8c2 100%);border-radius:4px 4px 0 0"></div>
<div class="gr" style="left:8px;top:963px;width:2px;height:2px;"></div>
<div class="gr" style="left:8px;top:968px;width:2px;height:2px;"></div>
<div class="gr" style="left:8px;top:973px;width:2px;height:2px;"></div>
<div class="gr" style="left:8px;top:978px;width:2px;height:2px;"></div>
<div class="gr" style="left:8px;top:983px;width:2px;height:2px;"></div>
<div class="t" style="left:18px;top:963px;color:#1a1a1a">输出</div>
<svg style="position:absolute;left:1370px;top:966px;" width="10" height="13" viewBox="0 0 10 13"><path d="M2 1.5H8M3 1.5V8M7 1.5V8M1 8H9M5 8V12.5" stroke="#000" stroke-width="1.6" fill="none"/></svg>
<svg style="position:absolute;left:1388px;top:966px;" width="13" height="12" viewBox="0 0 13 12"><path d="M1.5 1.5L11 10.5M11 1.5L1.5 10.5" stroke="#000" stroke-width="2"/></svg>
<div style="left:1px;top:990px;width:1408px;height:385px;background:#f0f0f0"></div>
<div style="left:5px;top:994px;width:1399px;height:24px;border:1px solid #a0a0a0;border-right-color:#fff;border-bottom-color:#fff"></div>
<div class="t" style="left:5px;top:993px;font-size:15px;color:#111">编译</div>
<div style="left:6px;top:1021px;width:1398px;height:321px;background:#ababab;border:1px solid #7a7a7a;border-top:2px solid #8a8a8a;border-right-color:#fff;border-bottom-color:#fff"></div>
<div style="left:8px;top:1023px;width:1395px;height:17px;background:#f0f0f0;border-right:2px solid #a8a8a8"></div>
<div style="left:8px;top:1040px;width:1395px;height:132px;background:#fff"></div>
<div style="left:8px;top:1040px;width:1395px;height:19px;background:#f0f0f0"></div>
<div style="left:8px;top:1040px;width:1395px;height:1px;background:#a8a8a8"></div>
<div style="left:8px;top:1171px;width:1395px;height:2px;background:#8a8a8a"></div>
<div style="left:44px;top:1023px;width:1px;height:17px;background:#c8c8c8"></div>
<div style="left:144px;top:1023px;width:1px;height:17px;background:#c8c8c8"></div>
<div style="left:332px;top:1023px;width:1px;height:17px;background:#c8c8c8"></div>
<div style="left:519px;top:1023px;width:1px;height:17px;background:#c8c8c8"></div>
<div style="left:1145px;top:1023px;width:1px;height:17px;background:#c8c8c8"></div>
<div style="left:1245px;top:1023px;width:1px;height:17px;background:#c8c8c8"></div>
<div class="t" style="left:18px;top:1021px;font-size:15px;color:#111"><span style="font-family:'Liberation Mono';font-size:12.5px">No.</span></div>
<div class="t" style="left:48px;top:1021px;font-size:15px;color:#111">结果</div>
<div class="t" style="left:148px;top:1021px;font-size:15px;color:#111">数据名</div>
<div class="t" style="left:336px;top:1021px;font-size:15px;color:#111">分类</div>
<div class="t" style="left:523px;top:1021px;font-size:15px;color:#111">内容</div>
<div class="t" style="left:1148px;top:1021px;font-size:15px;color:#111">错误代码</div>
<div class="t" style="left:34px;top:1039.5px;font-size:15px;color:#111"><span style="font-family:'Liberation Mono';font-size:12.5px">1</span></div>
<div class="t" style="left:48px;top:1039.5px;font-size:15px;color:#111"><span style="font-family:'Liberation Mono';font-size:12.5px">Information</span></div>
<div class="t" style="left:148px;top:1039.5px;font-size:15px;color:#111">–</div>
<div class="t" style="left:336px;top:1039.5px;font-size:15px;color:#111">–</div>
<div class="t" style="left:523px;top:1039.5px;font-size:15px;color:#111">字软元件<span style="font-family:'Liberation Mono';font-size:12.5px"> VAR</span>用<span style="font-family:'Liberation Mono';font-size:12.5px"> </span>使用<span style="font-family:'Liberation Mono';font-size:12.5px">0</span>点</div>
<div class="t" style="left:1148px;top:1039.5px;font-size:15px;color:#111"><span style="font-family:'Liberation Mono';font-size:12.5px">F1302</span></div>
<div style="left:8px;top:1059px;width:1395px;height:1px;background:#ececec"></div>
<div class="t" style="left:34px;top:1058.357px;font-size:15px;color:#111"><span style="font-family:'Liberation Mono';font-size:12.5px">2</span></div>
<div class="t" style="left:48px;top:1058.357px;font-size:15px;color:#111"><span style="font-family:'Liberation Mono';font-size:12.5px">Information</span></div>
<div class="t" style="left:148px;top:1058.357px;font-size:15px;color:#111">–</div>
<div class="t" style="left:336px;top:1058.357px;font-size:15px;color:#111">–</div>
<div class="t" style="left:523px;top:1058.357px;font-size:15px;color:#111">位软元件<span style="font-family:'Liberation Mono';font-size:12.5px"> VAR</span>用<span style="font-family:'Liberation Mono';font-size:12.5px"> </span>使用<span style="font-family:'Liberation Mono';font-size:12.5px">16</span>点<span style="font-family:'Liberation Mono';font-size:12.5px"> (</span>范围<span style="font-family:'Liberation Mono';font-size:12.5px"> M7664 - M7679 )</span></div>
<div class="t" style="left:1148px;top:1058.357px;font-size:15px;color:#111"><span style="font-family:'Liberation Mono';font-size:12.5px">F1305</span></div>
<div style="left:8px;top:1078px;width:1395px;height:1px;background:#ececec"></div>
<div class="t" style="left:34px;top:1077.214px;font-size:15px;color:#111"><span style="font-family:'Liberation Mono';font-size:12.5px">3</span></div>
<div class="t" style="left:48px;top:1077.214px;font-size:15px;color:#111"><span style="font-family:'Liberation Mono';font-size:12.5px">Information</span></div>
<div class="t" style="left:148px;top:1077.214px;font-size:15px;color:#111">–</div>
<div class="t" style="left:336px;top:1077.214px;font-size:15px;color:#111">–</div>
<div class="t" style="left:523px;top:1077.214px;font-size:15px;color:#111">指针<span style="font-family:'Liberation Mono';font-size:12.5px"> VAR</span>用<span style="font-family:'Liberation Mono';font-size:12.5px"> </span>使用<span style="font-family:'Liberation Mono';font-size:12.5px">0</span>点</div>
<div class="t" style="left:1148px;top:1077.214px;font-size:15px;color:#111"><span style="font-family:'Liberation Mono';font-size:12.5px">F1310</span></div>
<div style="left:8px;top:1097px;width:1395px;height:1px;background:#ececec"></div>
<div class="t" style="left:34px;top:1096.071px;font-size:15px;color:#111"><span style="font-family:'Liberation Mono';font-size:12.5px">4</span></div>
<div class="t" style="left:48px;top:1096.071px;font-size:15px;color:#111"><span style="font-family:'Liberation Mono';font-size:12.5px">Information</span></div>
<div class="t" style="left:148px;top:1096.071px;font-size:15px;color:#111">–</div>
<div class="t" style="left:336px;top:1096.071px;font-size:15px;color:#111">–</div>
<div class="t" style="left:523px;top:1096.071px;font-size:15px;color:#111">定时器<span style="font-family:'Liberation Mono';font-size:12.5px"> VAR</span>用<span style="font-family:'Liberation Mono';font-size:12.5px"> </span>使用<span style="font-family:'Liberation Mono';font-size:12.5px">0</span>点</div>
<div class="t" style="left:1148px;top:1096.071px;font-size:15px;color:#111"><span style="font-family:'Liberation Mono';font-size:12.5px">F1312</span></div>
<div style="left:8px;top:1115px;width:1395px;height:1px;background:#ececec"></div>
<div class="t" style="left:34px;top:1114.9279999999999px;font-size:15px;color:#111"><span style="font-family:'Liberation Mono';font-size:12.5px">5</span></div>
<div class="t" style="left:48px;top:1114.9279999999999px;font-size:15px;color:#111"><span style="font-family:'Liberation Mono';font-size:12.5px">Information</span></div>
<div class="t" style="left:148px;top:1114.9279999999999px;font-size:15px;color:#111">–</div>
<div class="t" style="left:336px;top:1114.9279999999999px;font-size:15px;color:#111">–</div>
<div class="t" style="left:523px;top:1114.9279999999999px;font-size:15px;color:#111">高速定时器<span style="font-family:'Liberation Mono';font-size:12.5px"> VAR</span>用<span style="font-family:'Liberation Mono';font-size:12.5px"> </span>使用<span style="font-family:'Liberation Mono';font-size:12.5px">0</span>点</div>
<div class="t" style="left:1148px;top:1114.9279999999999px;font-size:15px;color:#111"><span style="font-family:'Liberation Mono';font-size:12.5px">F1316</span></div>
<div style="left:8px;top:1134px;width:1395px;height:1px;background:#ececec"></div>
<div class="t" style="left:34px;top:1133.785px;font-size:15px;color:#111"><span style="font-family:'Liberation Mono';font-size:12.5px">6</span></div>
<div class="t" style="left:48px;top:1133.785px;font-size:15px;color:#111"><span style="font-family:'Liberation Mono';font-size:12.5px">Information</span></div>
<div class="t" style="left:148px;top:1133.785px;font-size:15px;color:#111">–</div>
<div class="t" style="left:336px;top:1133.785px;font-size:15px;color:#111">–</div>
<div class="t" style="left:523px;top:1133.785px;font-size:15px;color:#111">计数器<span style="font-family:'Liberation Mono';font-size:12.5px"> VAR</span>用<span style="font-family:'Liberation Mono';font-size:12.5px"> </span>使用<span style="font-family:'Liberation Mono';font-size:12.5px">0</span>点</div>
<div class="t" style="left:1148px;top:1133.785px;font-size:15px;color:#111"><span style="font-family:'Liberation Mono';font-size:12.5px">F1324</span></div>
<div style="left:8px;top:1153px;width:1395px;height:1px;background:#ececec"></div>
<div class="t" style="left:34px;top:1152.642px;font-size:15px;color:#111"><span style="font-family:'Liberation Mono';font-size:12.5px">7</span></div>
<div class="t" style="left:48px;top:1152.642px;font-size:15px;color:#111"><span style="font-family:'Liberation Mono';font-size:12.5px">Information</span></div>
<div class="t" style="left:148px;top:1152.642px;font-size:15px;color:#111">–</div>
<div class="t" style="left:336px;top:1152.642px;font-size:15px;color:#111">–</div>
<div class="t" style="left:523px;top:1152.642px;font-size:15px;color:#111">步<span style="font-family:'Liberation Mono';font-size:12.5px"> VAR</span>用<span style="font-family:'Liberation Mono';font-size:12.5px"> </span>使用<span style="font-family:'Liberation Mono';font-size:12.5px">0</span>点</div>
<div class="t" style="left:1148px;top:1152.642px;font-size:15px;color:#111"><span style="font-family:'Liberation Mono';font-size:12.5px">F1328</span></div>
<div style="left:44px;top:1041px;width:1px;height:131px;background:#ececec"></div>
<div style="left:144px;top:1041px;width:1px;height:131px;background:#ececec"></div>
<div style="left:332px;top:1041px;width:1px;height:131px;background:#ececec"></div>
<div style="left:519px;top:1041px;width:1px;height:131px;background:#ececec"></div>
<div style="left:1145px;top:1041px;width:1px;height:131px;background:#ececec"></div>
<div style="left:1245px;top:1041px;width:1px;height:131px;background:#ececec"></div>
<div style="left:5px;top:1347px;width:1399px;height:22px;border:1px solid #a0a0a0;border-right-color:#fff;border-bottom-color:#fff"></div>
<div class="t" style="left:6px;top:1347px;font-size:15px;color:#111">已完成编译。<span style="font-family:'Liberation Mono';font-size:12.5px">Error: 0, Warning: 0</span></div>
<div style="left:1px;top:1374px;width:1408px;height:1px;background:#d8d8d8"></div>
<div style="left:1px;top:1375px;width:1408px;height:24px;background:#f0f0f0"></div>
<div style="left:662px;top:1377px;width:1px;height:21px;background:#d0d0d0"></div>
<div style="left:785px;top:1377px;width:1px;height:21px;background:#d0d0d0"></div>
<div style="left:896px;top:1377px;width:1px;height:21px;background:#d0d0d0"></div>
<div style="left:1205px;top:1377px;width:1px;height:21px;background:#d0d0d0"></div>
<div style="left:1341px;top:1377px;width:1px;height:21px;background:#d0d0d0"></div>
<div style="left:1386px;top:1377px;width:1px;height:21px;background:#d0d0d0"></div>
<div class="t" style="left:669px;top:1378px;font-size:15px;color:#111">简体中文</div>
<div class="t" style="left:791px;top:1378px;font-size:15px;color:#111">结构化</div>
<div class="t" style="left:1211px;top:1378px;font-size:15px;color:#111">FX3U/FX3UC</div>
<div class="t" style="left:1346px;top:1378px;font-size:15px;color:#111">本站</div>
<div class="t" style="left:1389px;top:1378px;font-size:15px;color:#111">数字</div>
<div style="left:1409px;top:0px;width:1px;height:1400px;background:#2e2e2e"></div>
<svg style="position:absolute;left:26px;top:243px;overflow:visible" width="20" height="20" viewBox="0 0 20 20"><path d="M0.5 5Q0.5 3.5 2 3.5H4.5V19.5H1.5Q0.5 19.5 0.5 18.5Z" fill="#f0c040" stroke="#a07818"/><path d="M15.5 7.5H18.5Q19.5 7.5 19.5 8.5V18.5Q19.5 19.5 18.5 19.5H15.5Z" fill="#e8b030" stroke="#a07818"/><path d="M0.5 13.5H19.5V18.5Q19.5 19.5 18.5 19.5H1.5Q0.5 19.5 0.5 18.5Z" fill="#f4c850" stroke="#a07818"/><path d="M1.5 15H18.5" stroke="#fff2b0"/><rect x="4" y="1" width="11" height="10" fill="#3a3a3a"/><rect x="6" y="2" width="2" height="2" fill="#6c6"/><rect x="10" y="4" width="4" height="7" fill="#ddd"/><path d="M8 19L16 9" stroke="#1040b0" stroke-width="2.6"/><path d="M14 7Q15 3 19 4L17 6L18 8Q16 9 15 9Z" fill="#1040b0"/><circle cx="8" cy="18.5" r="1.8" fill="none" stroke="#1040b0" stroke-width="1.4"/></svg>
<svg style="position:absolute;left:26px;top:268px;overflow:visible" width="20" height="20" viewBox="0 0 20 20"><rect x="4" y="1" width="10" height="14" fill="#555"/><rect x="5" y="5" width="4" height="8" fill="#aaa"/><rect x="10" y="3" width="3" height="3" fill="#d00"/><path d="M0.5 5Q0.5 3.5 2 3.5H4.5V19.5H1.5Q0.5 19.5 0.5 18.5Z" fill="#f0c040" stroke="#a07818"/><path d="M15.5 7.5H18.5Q19.5 7.5 19.5 8.5V18.5Q19.5 19.5 18.5 19.5H15.5Z" fill="#e8b030" stroke="#a07818"/><path d="M0.5 13.5H19.5V18.5Q19.5 19.5 18.5 19.5H1.5Q0.5 19.5 0.5 18.5Z" fill="#f4c850" stroke="#a07818"/><path d="M1.5 15H18.5" stroke="#fff2b0"/><rect x="5" y="10" width="8" height="6" fill="#999"/></svg>
<svg style="position:absolute;left:26px;top:293px;overflow:visible" width="20" height="20" viewBox="0 0 20 20"><circle cx="8" cy="7" r="7" fill="#1e78e0"/><path d="M2.3999999999999995 4.199999999999999Q5.9 0.0 10.1 1.3999999999999995Q14.3 4.9 11.5 8.4Q8 10.5 6.6 7Q3.8 8.4 2.3999999999999995 4.199999999999999Z" fill="#30b030"/><circle cx="5.9" cy="4.199999999999999" r="2.4499999999999997" fill="#fff" opacity=".35"/><path d="M6.5 7.5H14L16 9.5V19.5H6.5Z" fill="#e8eef8" stroke="#7080a0"/><path d="M8 11H13M8 13H13M8 15H12" stroke="#888"/><path d="M11 17L18 9" stroke="#30a030" stroke-width="2.2"/></svg>
<svg style="position:absolute;left:26px;top:318px;overflow:visible" width="20" height="20" viewBox="0 0 20 20"><circle cx="9" cy="7" r="6" fill="#1e78e0"/><path d="M4.199999999999999 4.6Q7.2 1.0 10.8 2.1999999999999993Q14.4 5.2 12.0 8.2Q9 10.0 7.8 7Q5.4 8.2 4.199999999999999 4.6Z" fill="#30b030"/><circle cx="7.2" cy="4.6" r="2.0999999999999996" fill="#fff" opacity=".35"/><path d="M0.5 5Q0.5 3.5 2 3.5H4.5V19.5H1.5Q0.5 19.5 0.5 18.5Z" fill="#f0c040" stroke="#a07818"/><path d="M15.5 7.5H18.5Q19.5 7.5 19.5 8.5V18.5Q19.5 19.5 18.5 19.5H15.5Z" fill="#e8b030" stroke="#a07818"/><path d="M0.5 13.5H19.5V18.5Q19.5 19.5 18.5 19.5H1.5Q0.5 19.5 0.5 18.5Z" fill="#f4c850" stroke="#a07818"/><path d="M1.5 15H18.5" stroke="#fff2b0"/><rect x="6.5" y="9.5" width="13" height="10" fill="#f0f0ff" stroke="#4040d0"/><rect x="6.5" y="9.5" width="13" height="3" fill="#5050e0"/><path d="M7 15.5H19M10.5 12V19" stroke="#6060d8"/></svg>
<svg style="position:absolute;left:50px;top:343px;overflow:visible" width="20" height="20" viewBox="0 0 20 20"><circle cx="8" cy="8" r="8" fill="#1e78e0"/><path d="M1.5999999999999996 4.8Q5.6 0.0 10.4 1.5999999999999996Q15.2 5.6 12.0 9.6Q8 12.0 6.4 8Q3.2 9.6 1.5999999999999996 4.8Z" fill="#30b030"/><circle cx="5.6" cy="4.8" r="2.8" fill="#fff" opacity=".35"/><rect x="6.5" y="10.5" width="14" height="10" fill="#f0f0ff" stroke="#4040d0"/><rect x="6.5" y="10.5" width="14" height="3" fill="#5050e0"/><path d="M7 16.5H20M10.5 13V20" stroke="#6060d8"/></svg>
<svg style="position:absolute;left:26px;top:368px;overflow:visible" width="20" height="20" viewBox="0 0 20 20"><rect x="6" y="1" width="13" height="9" fill="#333"/><rect x="7" y="2" width="11" height="7" fill="#70b8e8"/><rect x="3" y="10" width="16" height="3" fill="#222"/><path d="M0.5 5Q0.5 3.5 2 3.5H4.5V19.5H1.5Q0.5 19.5 0.5 18.5Z" fill="#f0c040" stroke="#a07818"/><path d="M15.5 7.5H18.5Q19.5 7.5 19.5 8.5V18.5Q19.5 19.5 18.5 19.5H15.5Z" fill="#e8b030" stroke="#a07818"/><path d="M0.5 13.5H19.5V18.5Q19.5 19.5 18.5 19.5H1.5Q0.5 19.5 0.5 18.5Z" fill="#f4c850" stroke="#a07818"/><path d="M1.5 15H18.5" stroke="#fff2b0"/><path d="M2 6L11 14" stroke="#40a040" stroke-width="2.4"/><rect x="10" y="13" width="9" height="3" fill="#222"/></svg>
<svg style="position:absolute;left:50px;top:393px;overflow:visible" width="20" height="20" viewBox="0 0 20 20"><rect x="4" y="1" width="14" height="16" fill="#444"/><rect x="5" y="3" width="5" height="14" fill="#e03030"/><rect x="12" y="3" width="4" height="3" fill="#6c6"/><path d="M12 8H16M12 11H16" stroke="#aaa"/><path d="M0.5 12.5H4V19.5H1.5Q0.5 19.5 0.5 18.5Z" fill="#f4c850" stroke="#a07818"/><path d="M18 12.5H19.5V18.5Q19.5 19.5 18.5 19.5H18Z" fill="#f4c850" stroke="#a07818"/></svg>
<svg style="position:absolute;left:26px;top:418px;overflow:visible" width="20" height="20" viewBox="0 0 20 20"><path d="M0.5 4.5H8L10 6.5H19.5V19.5H0.5Z" fill="#fbe8a0" stroke="#d8b860"/><circle cx="6" cy="6" r="3.5" fill="#f080b0"/><rect x="11" y="2" width="6" height="6" fill="#60c060"/><path d="M0.5 10H19.5V19.5H0.5Z" fill="#f8e0a0" stroke="#e0c070" opacity=".9"/></svg>
<svg style="position:absolute;left:50px;top:443px;overflow:visible" width="20" height="20" viewBox="0 0 20 20"><path d="M4.5 1.5H12L16.5 6V15H4.5Z" fill="#dde" stroke="#889"/><path d="M7 2V15M10 2V15" stroke="#aab"/><path d="M0.5 5Q0.5 3.5 2 3.5H4.5V19.5H1.5Q0.5 19.5 0.5 18.5Z" fill="#f0c040" stroke="#a07818"/><path d="M15.5 7.5H18.5Q19.5 7.5 19.5 8.5V18.5Q19.5 19.5 18.5 19.5H15.5Z" fill="#e8b030" stroke="#a07818"/><path d="M0.5 13.5H19.5V18.5Q19.5 19.5 18.5 19.5H1.5Q0.5 19.5 0.5 18.5Z" fill="#f0dca0" stroke="#a07818"/><path d="M1.5 15H18.5" stroke="#fff2b0"/></svg>
<svg style="position:absolute;left:74px;top:468px;overflow:visible" width="20" height="20" viewBox="0 0 20 20"><path d="M4.5 1.5H13L17.5 6V19.5H4.5Z" fill="#f4f4fa" stroke="#8088a8"/><path d="M8 5V17M14 5V17M6 9H8M8 11H14" stroke="#2030c0" stroke-width="1.6"/><path d="M6 13H16M10 11V16M12 11V16" stroke="#d02040" stroke-width="1.6"/><path d="M0.5 11.5H4V19.5H1.5Q0.5 19.5 0.5 18.5Z" fill="#f4c850" stroke="#a07818"/></svg>
<svg style="position:absolute;left:98px;top:493px;overflow:visible" width="20" height="20" viewBox="0 0 20 20"><path d="M3.5 1.5H12L16.5 6V19.5H3.5Z" fill="#f4f4fa" stroke="#8088a8"/><path d="M7 5V17M13 5V17M5 9H7M7 11H13" stroke="#2030c0" stroke-width="1.6"/><path d="M5 13H15M9 11V16M11 11V16" stroke="#d02040" stroke-width="1.6"/></svg>
<svg style="position:absolute;left:98px;top:518px;overflow:visible" width="20" height="20" viewBox="0 0 20 20"><path d="M3 3L12 1L15 8L6 11Z" fill="#7cc4f0" stroke="#4a90c8"/><path d="M2 6L9 4L11 12L4 14Z" fill="#b8e0f8" stroke="#80b0d8"/><rect x="6.5" y="9.5" width="13" height="10" fill="#f0f0ff" stroke="#4040d0"/><rect x="6.5" y="9.5" width="13" height="3" fill="#5050e0"/><path d="M7 15.5H19M10.5 12V19" stroke="#6060d8"/></svg>
<svg style="position:absolute;left:50px;top:543px;overflow:visible" width="20" height="20" viewBox="0 0 20 20"><path d="M3 2H15L17 5H5Z" fill="#4060d0"/><path d="M0.5 5Q0.5 3.5 2 3.5H4.5V19.5H1.5Q0.5 19.5 0.5 18.5Z" fill="#f0c040" stroke="#a07818"/><path d="M15.5 7.5H18.5Q19.5 7.5 19.5 8.5V18.5Q19.5 19.5 18.5 19.5H15.5Z" fill="#e8b030" stroke="#a07818"/><path d="M0.5 13.5H19.5V18.5Q19.5 19.5 18.5 19.5H1.5Q0.5 19.5 0.5 18.5Z" fill="#f4c850" stroke="#a07818"/><path d="M1.5 15H18.5" stroke="#fff2b0"/><rect x="4" y="5" width="13" height="9" fill="#30a040" stroke="#207030"/><rect x="2" y="8" width="4" height="3" fill="#30a040"/></svg>
<svg style="position:absolute;left:74px;top:568px;overflow:visible" width="20" height="20" viewBox="0 0 20 20"><path d="M0.5 5Q0.5 3.5 2 3.5H4.5V19.5H1.5Q0.5 19.5 0.5 18.5Z" fill="#f0c040" stroke="#a07818"/><path d="M15.5 7.5H18.5Q19.5 7.5 19.5 8.5V18.5Q19.5 19.5 18.5 19.5H15.5Z" fill="#e8b030" stroke="#a07818"/><path d="M0.5 13.5H19.5V18.5Q19.5 19.5 18.5 19.5H1.5Q0.5 19.5 0.5 18.5Z" fill="#f4c850" stroke="#a07818"/><path d="M1.5 15H18.5" stroke="#fff2b0"/><path d="M0.5 6.5H7L8.5 8.5H19.5V19.5H0.5Z" fill="#f4c850" stroke="#a07818"/><rect x="5" y="9" width="13" height="7" fill="#30a040" stroke="#207030"/><rect x="2" y="11" width="4" height="3" fill="#30a040"/></svg>
<svg style="position:absolute;left:98px;top:593px;overflow:visible" width="20" height="20" viewBox="0 0 20 20"><path d="M3.5 1.5H12L16.5 6V19.5H3.5Z" fill="#f4f4f8" stroke="#8088a8"/><rect x="4" y="8" width="12" height="8" fill="#888"/><text x="10" y="15" font-size="8" text-anchor="middle" fill="#fff" font-family="Liberation Sans" font-weight="bold">ST</text></svg>
<svg style="position:absolute;left:98px;top:618px;overflow:visible" width="20" height="20" viewBox="0 0 20 20"><path d="M3 3L12 1L15 8L6 11Z" fill="#7cc4f0" stroke="#4a90c8"/><path d="M2 6L9 4L11 12L4 14Z" fill="#b8e0f8" stroke="#80b0d8"/><rect x="6.5" y="9.5" width="13" height="10" fill="#f0f0ff" stroke="#4040d0"/><rect x="6.5" y="9.5" width="13" height="3" fill="#5050e0"/><path d="M7 15.5H19M10.5 12V19" stroke="#6060d8"/></svg>
<svg style="position:absolute;left:50px;top:643px;overflow:visible" width="20" height="20" viewBox="0 0 20 20"><path d="M0.5 5Q0.5 3.5 2 3.5H4.5V19.5H1.5Q0.5 19.5 0.5 18.5Z" fill="#f0c040" stroke="#a07818"/><path d="M15.5 7.5H18.5Q19.5 7.5 19.5 8.5V18.5Q19.5 19.5 18.5 19.5H15.5Z" fill="#e8b030" stroke="#a07818"/><path d="M0.5 13.5H19.5V18.5Q19.5 19.5 18.5 19.5H1.5Q0.5 19.5 0.5 18.5Z" fill="#f4c850" stroke="#a07818"/><path d="M1.5 15H18.5" stroke="#fff2b0"/><rect x="4" y="2" width="13" height="16" fill="#222"/><rect x="7" y="3" width="7" height="3" fill="#e03030"/><rect x="7" y="7" width="7" height="3" fill="#30b030"/><rect x="7" y="11" width="7" height="3" fill="#e8e030"/><rect x="7" y="15" width="7" height="2" fill="#fff"/></svg>
<svg style="position:absolute;left:50px;top:668px;overflow:visible" width="20" height="20" viewBox="0 0 20 20"><path d="M4.5 1.5H12L16.5 6V15H4.5Z" fill="#dde" stroke="#889"/><path d="M7 2V15M10 2V15" stroke="#aab"/><path d="M0.5 5Q0.5 3.5 2 3.5H4.5V19.5H1.5Q0.5 19.5 0.5 18.5Z" fill="#f0c040" stroke="#a07818"/><path d="M15.5 7.5H18.5Q19.5 7.5 19.5 8.5V18.5Q19.5 19.5 18.5 19.5H15.5Z" fill="#e8b030" stroke="#a07818"/><path d="M0.5 13.5H19.5V18.5Q19.5 19.5 18.5 19.5H1.5Q0.5 19.5 0.5 18.5Z" fill="#f0dca0" stroke="#a07818"/><path d="M1.5 15H18.5" stroke="#fff2b0"/></svg>
<svg style="position:absolute;left:26px;top:693px;overflow:visible" width="20" height="20" viewBox="0 0 20 20"><rect x="3" y="1" width="15" height="3" fill="#333"/><path d="M0.5 5Q0.5 3.5 2 3.5H4.5V19.5H1.5Q0.5 19.5 0.5 18.5Z" fill="#f0c040" stroke="#a07818"/><path d="M15.5 7.5H18.5Q19.5 7.5 19.5 8.5V18.5Q19.5 19.5 18.5 19.5H15.5Z" fill="#e8b030" stroke="#a07818"/><path d="M0.5 13.5H19.5V18.5Q19.5 19.5 18.5 19.5H1.5Q0.5 19.5 0.5 18.5Z" fill="#f4c850" stroke="#a07818"/><path d="M1.5 15H18.5" stroke="#fff2b0"/><rect x="3" y="3" width="15" height="14" fill="#555"/><circle cx="9" cy="12" r="5" fill="#3070e0"/><path d="M9 12V7A5 5 0 0 1 14 12Z" fill="#e03030"/><path d="M9 12H14A5 5 0 0 1 6 16Z" fill="#30b040"/></svg>
<svg style="position:absolute;left:333px;top:150px;overflow:visible" width="20" height="20" viewBox="0 0 20 20"><path d="M3 3L12 1L15 8L6 11Z" fill="#7cc4f0" stroke="#4a90c8"/><path d="M2 6L9 4L11 12L4 14Z" fill="#b8e0f8" stroke="#80b0d8"/><rect x="6.5" y="9.5" width="13" height="10" fill="#f0f0ff" stroke="#4040d0"/><rect x="6.5" y="9.5" width="13" height="3" fill="#5050e0"/><path d="M7 15.5H19M10.5 12V19" stroke="#6060d8"/></svg>
<svg style="position:absolute;left:609px;top:151px;overflow:visible" width="20" height="20" viewBox="0 0 20 20"><path d="M3.5 1.5H12L16.5 6V19.5H3.5Z" fill="#f4f4f8" stroke="#8088a8"/><rect x="4" y="8" width="12" height="8" fill="#888"/><text x="10" y="15" font-size="8" text-anchor="middle" fill="#fff" font-family="Liberation Sans" font-weight="bold">ST</text></svg>
<svg style="position:absolute;left:871px;top:149px;overflow:visible" width="20" height="20" viewBox="0 0 20 20"><circle cx="8" cy="8" r="8" fill="#1e78e0"/><path d="M1.5999999999999996 4.8Q5.6 0.0 10.4 1.5999999999999996Q15.2 5.6 12.0 9.6Q8 12.0 6.4 8Q3.2 9.6 1.5999999999999996 4.8Z" fill="#30b030"/><circle cx="5.6" cy="4.8" r="2.8" fill="#fff" opacity=".35"/><rect x="6.5" y="10.5" width="14" height="10" fill="#f0f0ff" stroke="#4040d0"/><rect x="6.5" y="10.5" width="14" height="3" fill="#5050e0"/><path d="M7 16.5H20M10.5 13V20" stroke="#6060d8"/></svg>
<svg style="position:absolute;left:1100px;top:150px;overflow:visible" width="20" height="20" viewBox="0 0 20 20"><path d="M3 3L12 1L15 8L6 11Z" fill="#7cc4f0" stroke="#4a90c8"/><path d="M2 6L9 4L11 12L4 14Z" fill="#b8e0f8" stroke="#80b0d8"/><rect x="6.5" y="9.5" width="13" height="10" fill="#f0f0ff" stroke="#4040d0"/><rect x="6.5" y="9.5" width="13" height="3" fill="#5050e0"/><path d="M7 15.5H19M10.5 12V19" stroke="#6060d8"/></svg>
<svg style="position:absolute;left:1327px;top:151px;overflow:hidden" width="16" height="20" viewBox="0 0 16 20"><path d="M0.5 1.5H9L13.5 6V19.5H0.5Z" fill="#f4f4fa" stroke="#8088a8"/><path d="M4 5V17M10 5V17M2 9H4M4 11H10" stroke="#2030c0" stroke-width="1.6"/><path d="M2 13H12M6 11V16M8 11V16" stroke="#d02040" stroke-width="1.6"/></svg>
<svg style="position:absolute;left:8px;top:214px;overflow:visible" width="20" height="20" viewBox="0 0 20 20"><path d="M1.5 5.5H12.5V18.5H1.5Z" fill="#fff" stroke="#555"/><path d="M13 1V9M9 5H17" stroke="#f07010" stroke-width="3.2"/></svg>
<svg style="position:absolute;left:36px;top:214px;overflow:visible" width="20" height="20" viewBox="0 0 20 20"><path d="M1.5 2.5H8L10.5 5V13.5H1.5Z" fill="#e8f0ff" stroke="#4070c0"/><path d="M3 6H8M3 8.5H8" stroke="#4070c0"/><path d="M8.5 6.5H15L18.5 10V19.5H8.5Z" fill="#e8f0ff" stroke="#2050b0"/><path d="M10 12H16M10 14.5H16M10 17H16" stroke="#2050b0"/></svg>
<svg style="position:absolute;left:64px;top:214px;overflow:visible" width="20" height="20" viewBox="0 0 20 20"><rect x="2.5" y="3.5" width="11" height="13" fill="#f0f0f4" stroke="#c8c8d4"/><rect x="5.5" y="1.5" width="5" height="3" fill="#fff" stroke="#c8c8d4"/><path d="M9.5 9.5H18.5V19.5H9.5Z" fill="#f4f4f8" stroke="#c8c8d4"/></svg>
<svg style="position:absolute;left:92px;top:214px;overflow:visible" width="20" height="20" viewBox="0 0 20 20"><path d="M1.5 0.5H7L9.5 3V12.5H1.5Z" fill="#fff" stroke="#333"/><path d="M3 4H7M3 6H7M3 8H6" stroke="#777"/><circle cx="13" cy="13" r="6.5" fill="#1a6ad8"/><rect x="12" y="11" width="2.4" height="6" fill="#fff"/><circle cx="13.2" cy="8.6" r="1.3" fill="#fff"/></svg>
<svg style="position:absolute;left:121px;top:214px;overflow:visible" width="20" height="20" viewBox="0 0 20 20"><path d="M1.5 1.5H10L14.5 6V19.5H1.5Z" fill="#e8f0fc" stroke="#5a7ac0"/><path d="M4 9C5 5 10 5 11 8L12.5 6.5V10.5H8.5L10 9C9 7 6 7 5.5 9.5Z" fill="#20b040"/><path d="M12 12C11 16 6 16 5 13L3.5 14.5V10.5H7.5L6 12C7 14 10 14 10.5 11.5Z" fill="#20b040"/></svg>
<svg style="position:absolute;left:153px;top:214px;overflow:visible" width="28" height="20" viewBox="0 0 28 20"><path d="M4 1H11V10H4Z" fill="#555"/><path d="M0 12L4 9H11V12Z" fill="#333"/><rect x="7" y="5" width="8" height="14" fill="#888"/><rect x="7" y="9" width="3" height="10" fill="#f06060"/><rect x="11" y="8" width="3" height="9" fill="#fff"/><rect x="11" y="5" width="2" height="2" fill="#6c6"/><path d="M21 9H27L24 12Z" fill="#000"/></svg>
<svg style="position:absolute;left:9px;top:795px;overflow:visible" width="30" height="30" viewBox="0 0 30 30"><path d="M8 1H20V15H8Z" fill="#444"/><path d="M9 2H19V14H9Z" fill="#9a9a9a"/><path d="M0 19L8 14H20V19Z" fill="#666"/><path d="M1 19H19V20H1Z" fill="#ccc"/><rect x="12" y="10" width="7" height="20" fill="#d82020"/><rect x="18" y="8" width="10" height="22" fill="#555"/><path d="M20 12H26M20 15H26M20 18H26M20 21H26M20 24H26" stroke="#bbb"/><rect x="20" y="9" width="2" height="2" fill="#6c6"/></svg>
<svg style="position:absolute;left:8px;top:835px;overflow:visible" width="30" height="30" viewBox="0 0 30 30"><path d="M1 3Q8 0 15 4Q22 0 29 3V22Q22 19 15 23Q8 19 1 22Z" fill="#f4ecd8" stroke="#666"/><path d="M15 4V23" stroke="#999"/><path d="M4 8H12M4 11H12M18 8H26M18 11H26" stroke="#d8ccb0"/><path d="M16 30V18Q17 12 20 14L22 9Q24 8 24 11L25 16Q29 17 29 21V30Z" fill="#f0c050" stroke="#b08020"/><rect x="17" y="26" width="12" height="4" fill="#6ab060"/></svg>
<svg style="position:absolute;left:9px;top:875px;overflow:visible" width="30" height="30" viewBox="0 0 30 30"><path d="M4 3H19V16H4Z" fill="#333"/><path d="M5 4H18V15H5Z" fill="#30c8f0"/><path d="M1 20L5 16H18V20Z" fill="#555"/><rect x="17" y="6" width="12" height="24" fill="#333"/><path d="M19 10H27M19 14H27M19 22H27M19 26H27" stroke="#aaa"/><path d="M2 8V28H16" stroke="#10a030" stroke-width="2" fill="none"/></svg>
</body></html>
